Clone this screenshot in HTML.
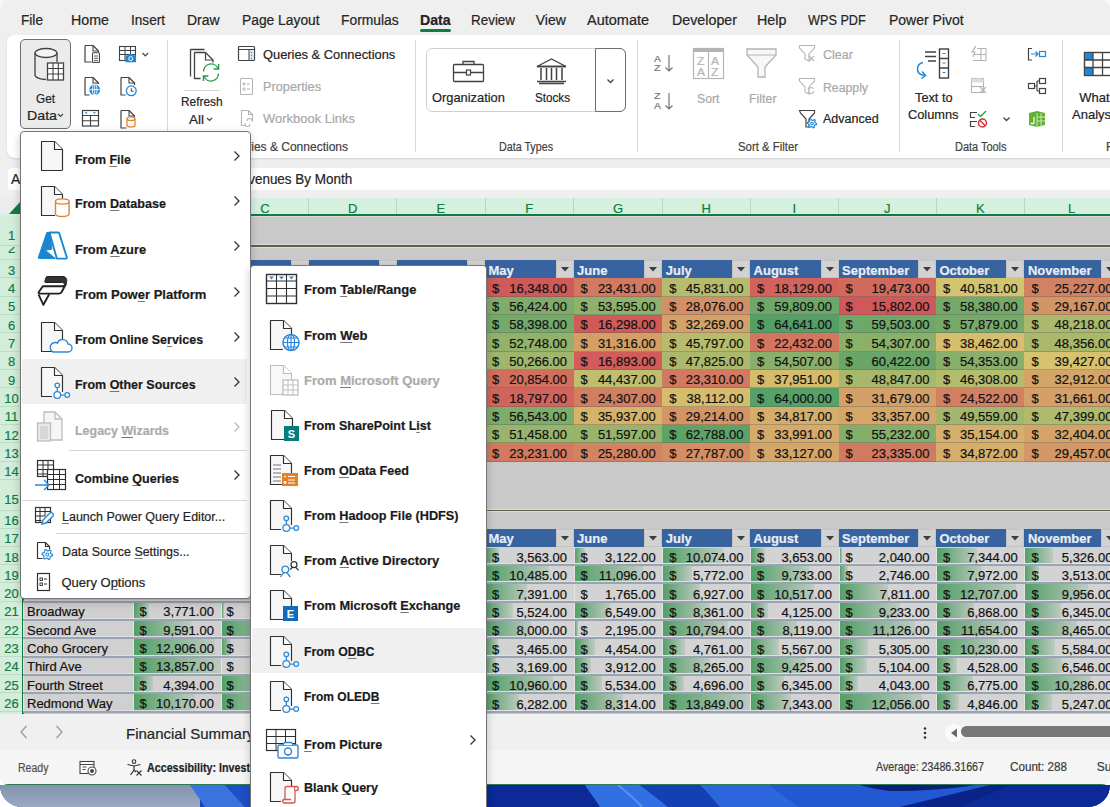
<!DOCTYPE html><html><head><meta charset="utf-8"><style>
*{margin:0;padding:0}
html,body{width:1110px;height:807px;overflow:hidden;background:#fff}
body{position:relative;font-family:"Liberation Sans",sans-serif}
.t{position:absolute;white-space:nowrap;transform-origin:0 0;-webkit-text-stroke:0.2px currentColor}
.r{position:absolute;display:block}
u{text-decoration-thickness:1px;text-underline-offset:2px;text-decoration-color:#777}
</style></head><body><div class="r" style="left:0px;top:0px;width:1110px;height:30px;background:#f7f7f7"></div><div class="r" style="left:0;top:0;width:1110px;height:785px;background:#efefef;border-radius:10px 10px 8px 8px;overflow:hidden"><div class="t" style="left:21.0px;top:12.65px;font-size:14px;line-height:14px;color:#242424;transform:scaleX(0.975);">File</div><div class="t" style="left:71.0px;top:12.65px;font-size:14px;line-height:14px;color:#242424;transform:scaleX(1.018);">Home</div><div class="t" style="left:131.0px;top:12.65px;font-size:14px;line-height:14px;color:#242424;transform:scaleX(0.971);">Insert</div><div class="t" style="left:187.0px;top:12.65px;font-size:14px;line-height:14px;color:#242424;">Draw</div><div class="t" style="left:241.7px;top:12.65px;font-size:14px;line-height:14px;color:#242424;transform:scaleX(0.987);">Page Layout</div><div class="t" style="left:340.7px;top:12.65px;font-size:14px;line-height:14px;color:#242424;transform:scaleX(0.987);">Formulas</div><div class="t" style="left:420.0px;top:12.65px;font-size:14px;line-height:14px;font-weight:bold;color:#242424;transform:scaleX(1.012);">Data</div><div class="t" style="left:471.0px;top:12.65px;font-size:14px;line-height:14px;color:#242424;transform:scaleX(0.959);">Review</div><div class="t" style="left:535.7px;top:12.65px;font-size:14px;line-height:14px;color:#242424;">View</div><div class="t" style="left:587.3px;top:12.65px;font-size:14px;line-height:14px;color:#242424;transform:scaleX(1.035);">Automate</div><div class="t" style="left:671.7px;top:12.65px;font-size:14px;line-height:14px;color:#242424;transform:scaleX(1.019);">Developer</div><div class="t" style="left:757.3px;top:12.65px;font-size:14px;line-height:14px;color:#242424;transform:scaleX(1.021);">Help</div><div class="t" style="left:808.3px;top:12.65px;font-size:14px;line-height:14px;color:#242424;transform:scaleX(0.905);">WPS PDF</div><div class="t" style="left:889.0px;top:12.65px;font-size:14px;line-height:14px;color:#242424;">Power Pivot</div><div class="r" style="left:420px;top:29px;width:31px;height:3px;background:#107c41;border-radius:2px"></div><div class="r" style="left:7px;top:35px;width:1120px;height:123px;background:#fff;border-radius:8px;box-shadow:0 1px 2px rgba(0,0,0,0.12)"></div><div class="r" style="left:166.5px;top:40px;width:1px;height:112px;background:#d9d9d9"></div><div class="r" style="left:415px;top:40px;width:1px;height:112px;background:#d9d9d9"></div><div class="r" style="left:636.5px;top:40px;width:1px;height:112px;background:#d9d9d9"></div><div class="r" style="left:898.5px;top:40px;width:1px;height:112px;background:#d9d9d9"></div><div class="r" style="left:1062px;top:40px;width:1px;height:112px;background:#d9d9d9"></div><div class="r" style="left:20px;top:39px;width:51px;height:90px;background:#ebebeb;border:1px solid #6e6e6e;border-radius:5px;box-sizing:border-box"></div><svg class="r" style="left:33px;top:47px" width="32" height="35" viewBox="0 0 32 35" fill="none"><ellipse cx="13" cy="6" rx="11" ry="4.5" stroke="#424242" stroke-width="1.3" fill="#f4f4f4"/><path d="M2 6v22c0 2.5 5 4.5 11 4.5" stroke="#424242" stroke-width="1.3"/><path d="M24 6v9" stroke="#424242" stroke-width="1.3"/><rect x="14.5" y="16" width="16" height="17" fill="#fff" stroke="#424242" stroke-width="1.3"/><path d="M14.5 21.5h16M14.5 27h16M20 16v17M25.3 16v17" stroke="#424242" stroke-width="1.1"/><rect x="14.5" y="16" width="16" height="5" fill="#424242" opacity="0.0"/></svg><div class="t" style="left:36.0px;top:91.50px;font-size:13px;line-height:13px;color:#242424;transform:scaleX(0.907);">Get</div><div class="t" style="left:26.8px;top:108.70px;font-size:13px;line-height:13px;color:#242424;transform:scaleX(1.093);">Data</div><svg class="r" style="left:57px;top:113px" width="7" height="5" viewBox="0 0 7 5" fill="none"><path d="M1 1l2.5 2.5L6 1" stroke="#424242" stroke-width="1.2"/></svg><svg class="r" style="left:78px;top:40px" width="80" height="90" viewBox="0 0 80 90" fill="none"><path d="M7 5.5H15L20.5 11V12.5M7 5.5V22H13.5" stroke="#424242" stroke-width="1.2" stroke-linejoin="round"/><path d="M15 5.5V11H20.5" stroke="#424242" stroke-width="1.1"/><rect x="14.5" y="12.8" width="7" height="9.7" rx="1" stroke="#424242" stroke-width="1.1" fill="#fff"/><path d="M16 16H20M16 18.3H20M16 20.6H20" stroke="#424242" stroke-width=".9"/><path d="M7 37.5H15L20.5 43V44M7 37.5V55H11.5" stroke="#424242" stroke-width="1.2" stroke-linejoin="round"/><path d="M15 37.5V43H20.5" stroke="#424242" stroke-width="1.1"/><circle cx="16.7" cy="49.7" r="5.4" fill="#1f87d6"/><path d="M11.6 49.7H21.8M16.7 44.5V55" stroke="#fff" stroke-width=".9"/><ellipse cx="16.7" cy="49.7" rx="2.3" ry="5.2" stroke="#fff" stroke-width=".9"/><rect x="4.5" y="70.5" width="16" height="15.5" stroke="#424242" stroke-width="1.2" fill="#fff"/><path d="M4.5 75.5H20.5M4.5 80.7H20.5M12.5 75.5V86" stroke="#424242" stroke-width="1.1"/><path d="M6.5 72.3h3.2L8.1 74zM14.8 72.3h3.2L16.4 74z" fill="#1f87d6"/><rect x="41.5" y="6.5" width="16" height="14" stroke="#424242" stroke-width="1.1" fill="#fff"/><path d="M41.5 10.5H57.5M41.5 14.5H57.5M47 6.5V20.5M52.5 6.5V14.5" stroke="#424242" stroke-width="1"/><path d="M47.5 15.3h2.5l1-1.3h3.5l1 1.3h2.5v7h-10.5z" fill="#1f87d6"/><circle cx="52.7" cy="18.6" r="2" stroke="#fff" stroke-width="1"/><path d="M64.5 13l2.8 2.8 2.8-2.8" stroke="#424242" stroke-width="1.2"/><path d="M43 37.5H51L56.5 43V45M43 37.5V55H47.5" stroke="#424242" stroke-width="1.2" stroke-linejoin="round"/><path d="M51 37.5V43H56.5" stroke="#424242" stroke-width="1.1"/><circle cx="53.3" cy="50.8" r="4.9" stroke="#1f87d6" stroke-width="1.3" fill="#fff"/><path d="M53.3 48.2V51.2H55.6" stroke="#424242" stroke-width="1"/><path d="M43 70.5H51L56.5 76V77M43 70.5V88H48.5" stroke="#424242" stroke-width="1.2" stroke-linejoin="round"/><path d="M51 70.5V76H56.5" stroke="#424242" stroke-width="1.1"/><path d="M49 78.7V85.3c0 1 1.8 1.7 4 1.7s4-.7 4-1.7V78.7" stroke="#e07b1a" stroke-width="1.2" fill="#fff"/><ellipse cx="53" cy="78.7" rx="4" ry="1.7" stroke="#e07b1a" stroke-width="1.2" fill="#fff"/></svg><svg class="r" style="left:180px;top:40px" width="50" height="50" viewBox="0 0 50 50" fill="none"><path d="M10.5 9.5H24.5M10.5 9.5V36.5" stroke="#424242" stroke-width="1.3"/><path d="M14.5 12.5H25.5L33 20V22.5M14.5 12.5V38.5H20.5" stroke="#424242" stroke-width="1.3" stroke-linejoin="round"/><path d="M25.5 12.5V20H33" stroke="#424242" stroke-width="1.2"/><path d="M23.6 31.5A7.5 7.5 0 0 1 38 28.5M38.4 33.5A7.5 7.5 0 0 1 24 36.5" stroke="#2a9a4a" stroke-width="1.4"/><path d="M38.6 24V29H33.6M23.4 41V36H28.4" stroke="#2a9a4a" stroke-width="1.4"/></svg><div class="r" style="left:184px;top:89.5px;width:36px;height:1px;background:#d5d5d5"></div><div class="t" style="left:180.5px;top:95.00px;font-size:13px;line-height:13px;color:#242424;transform:scaleX(0.912);">Refresh</div><div class="t" style="left:188.8px;top:112.60px;font-size:13px;line-height:13px;color:#242424;transform:scaleX(1.038);">All</div><svg class="r" style="left:206px;top:117px" width="7" height="5" viewBox="0 0 7 5" fill="none"><path d="M1 1l2.5 2.5L6 1" stroke="#424242" stroke-width="1.2"/></svg><svg class="r" style="left:237px;top:45px" width="20" height="18" viewBox="0 0 20 18" fill="none"><rect x="1.5" y="1.5" width="16" height="14" rx="1" stroke="#424242" stroke-width="1.2" fill="#fff"/><path d="M1.5 4.5h16" stroke="#424242" stroke-width="1.2"/><rect x="12" y="5" width="5" height="10" fill="#d6e9f8"/><path d="M12 4.5v11" stroke="#424242" stroke-width="1"/><path d="M14.5 7v1.2M14.5 10v1.2M14.5 13v1.2" stroke="#1f87d6" stroke-width="1"/></svg><div class="t" style="left:262.7px;top:48.62px;font-size:12.5px;line-height:12.5px;color:#242424;transform:scaleX(1.029);">Queries &amp; Connections</div><svg class="r" style="left:239px;top:77px" width="16" height="19" viewBox="0 0 16 19" fill="none"><rect x="1.5" y="1.5" width="12" height="16" rx="1" stroke="#b4b4b4" stroke-width="1.1" fill="#fff"/><path d="M4 6h2v2H4zM4 11h2v2H4z" stroke="#b4b4b4" stroke-width=".9"/><path d="M8 7h3M8 12h3" stroke="#b4b4b4" stroke-width="1"/></svg><div class="t" style="left:262.7px;top:81.02px;font-size:12.5px;line-height:12.5px;color:#a8a8a8;transform:scaleX(1.018);">Properties</div><svg class="r" style="left:239px;top:109px" width="18" height="19" viewBox="0 0 18 19" fill="none"><path d="M2.5 1.5h7l4 4v6M2.5 1.5v15h3" stroke="#b4b4b4" stroke-width="1.1" fill="none"/><path d="M9.5 1.5v4h4" stroke="#b4b4b4" stroke-width="1.1"/><path d="M8 12a2.5 2.5 0 0 1 5 0v1M11 15a2.5 2.5 0 0 1-5 0v-1" stroke="#b4b4b4" stroke-width="1.1"/></svg><div class="t" style="left:262.7px;top:113.02px;font-size:12.5px;line-height:12.5px;color:#a8a8a8;transform:scaleX(1.037);">Workbook Links</div><div class="t" style="left:224.6px;top:141.34px;font-size:12px;line-height:12px;color:#424242;">Queries &amp; Connections</div><div class="r" style="left:425.5px;top:47.5px;width:200px;height:64.5px;border:1px solid #d0d0d0;border-radius:6px;box-sizing:border-box;background:#fff"></div><div class="r" style="left:595px;top:47.5px;width:30.5px;height:64.5px;border:1px solid #6e6e6e;border-radius:0 6px 6px 0;box-sizing:border-box;background:#fff"></div><svg class="r" style="left:606px;top:78px" width="9" height="6" viewBox="0 0 9 6" fill="none"><path d="M1.5 1.5l3 3 3-3" stroke="#424242" stroke-width="1.3"/></svg><svg class="r" style="left:452px;top:59px" width="34" height="25" viewBox="0 0 34 25" fill="none"><rect x="1.5" y="5.5" width="30" height="17" rx="1" stroke="#424242" stroke-width="1.3" fill="#fff"/><path d="M11 5.5v-3h11v3M1.5 13.5h30" stroke="#424242" stroke-width="1.3"/><rect x="14.5" y="11" width="4" height="5" fill="#fff" stroke="#424242" stroke-width="1.2"/></svg><div class="t" style="left:432.4px;top:91.00px;font-size:13px;line-height:13px;color:#242424;transform:scaleX(0.989);">Organization</div><svg class="r" style="left:535px;top:57px" width="33" height="28" viewBox="0 0 33 28" fill="none"><path d="M2 9.5L16.5 2 31 9.5z" stroke="#424242" stroke-width="1.3" fill="#fff"/><path d="M2 9.5h29M2 24.5h29M4 26.5h25" stroke="#424242" stroke-width="1.3"/><path d="M6 11v12M11.5 11v12M16.5 11v12M21.5 11v12M27 11v12" stroke="#424242" stroke-width="1.5"/></svg><div class="t" style="left:535.0px;top:91.00px;font-size:13px;line-height:13px;color:#242424;transform:scaleX(0.897);">Stocks</div><div class="t" style="left:654.0px;top:54.88px;font-size:9px;line-height:9px;color:#777;transform:scaleX(1.166);">A</div><div class="t" style="left:654.0px;top:63.88px;font-size:9px;line-height:9px;color:#777;transform:scaleX(1.200);">Z</div><svg class="r" style="left:664px;top:54px" width="10" height="19" viewBox="0 0 10 19" fill="none"><path d="M5 1v16M1.5 13.5L5 17l3.5-3.5" stroke="#777" stroke-width="1.2"/></svg><div class="t" style="left:654.0px;top:92.38px;font-size:9px;line-height:9px;color:#777;transform:scaleX(1.200);">Z</div><div class="t" style="left:654.0px;top:102.38px;font-size:9px;line-height:9px;color:#777;transform:scaleX(1.166);">A</div><svg class="r" style="left:664px;top:92px" width="10" height="19" viewBox="0 0 10 19" fill="none"><path d="M5 1v16M1.5 13.5L5 17l3.5-3.5" stroke="#777" stroke-width="1.2"/></svg><svg class="r" style="left:692px;top:47px" width="33" height="33" viewBox="0 0 33 33" fill="none"><rect x="1.5" y="1.5" width="30" height="30" stroke="#b4b4b4" stroke-width="1.2" fill="#fff"/><rect x="1.5" y="1.5" width="30" height="3.5" fill="#b4b4b4"/><path d="M16.5 5v26.5" stroke="#b4b4b4" stroke-width="1.2"/></svg><div class="t" style="left:697.0px;top:57.03px;font-size:10px;line-height:10px;color:#b4b4b4;transform:scaleX(1.200);">Z</div><div class="t" style="left:697.0px;top:67.53px;font-size:10px;line-height:10px;color:#b4b4b4;transform:scaleX(1.199);">A</div><div class="t" style="left:711.0px;top:57.03px;font-size:10px;line-height:10px;color:#b4b4b4;transform:scaleX(1.199);">A</div><div class="t" style="left:711.0px;top:67.53px;font-size:10px;line-height:10px;color:#b4b4b4;transform:scaleX(1.200);">Z</div><div class="t" style="left:697.0px;top:91.60px;font-size:13px;line-height:13px;color:#a8a8a8;transform:scaleX(0.944);">Sort</div><svg class="r" style="left:745px;top:47px" width="33" height="33" viewBox="0 0 33 33" fill="none"><path d="M2 2h29v6L20 20v10h-7V20L2 8z" stroke="#b4b4b4" stroke-width="1.3" fill="#f7f7f7"/><path d="M2 8h29" stroke="#b4b4b4" stroke-width="1"/></svg><div class="t" style="left:748.5px;top:91.60px;font-size:13px;line-height:13px;color:#a8a8a8;transform:scaleX(0.952);">Filter</div><svg class="r" style="left:798px;top:44px" width="19" height="19" viewBox="0 0 19 19" fill="none"><path d="M1.5 1.5h15v2.5l-5.5 6v7l-4 -2v-5l-5.5-6z" stroke="#b4b4b4" stroke-width="1.1" fill="#fff"/><path d="M11 12l5 5M16 12l-5 5" stroke="#b4b4b4" stroke-width="1.1"/></svg><div class="t" style="left:823.0px;top:48.72px;font-size:12.5px;line-height:12.5px;color:#a8a8a8;">Clear</div><svg class="r" style="left:798px;top:77px" width="19" height="19" viewBox="0 0 19 19" fill="none"><path d="M1.5 1.5h15v2.5l-5.5 6v7l-4 -2v-5l-5.5-6z" stroke="#b4b4b4" stroke-width="1.1" fill="#fff"/><path d="M10 13a3 3 0 0 1 5.5-1M16 14a3 3 0 0 1-5.5 1" stroke="#b4b4b4" stroke-width="1.1"/></svg><div class="t" style="left:823.0px;top:81.62px;font-size:12.5px;line-height:12.5px;color:#a8a8a8;transform:scaleX(0.981);">Reapply</div><svg class="r" style="left:798px;top:109px" width="19" height="20" viewBox="0 0 19 20" fill="none"><path d="M1.5 1.5h15v2.5l-5.5 6v8h-3v-8l-5.5-6z" stroke="#424242" stroke-width="1.2" fill="#fff"/><path d="M18.60 14.50 L18.44 15.69 L16.77 16.10 L16.26 16.76 L16.30 18.48 L15.19 18.94 L14.00 17.70 L13.17 17.59 L11.70 18.48 L10.75 17.75 L11.23 16.10 L10.91 15.33 L9.40 14.50 L9.56 13.31 L11.23 12.90 L11.74 12.24 L11.70 10.52 L12.81 10.06 L14.00 11.30 L14.83 11.41 L16.30 10.52 L17.25 11.25 L16.77 12.90 L17.09 13.67Z" stroke="#1f87d6" stroke-width="1.2" fill="#fff" stroke-linejoin="round"/><circle cx="14" cy="14.5" r="1.30" stroke="#1f87d6" stroke-width="1.08" fill="#fff"/></svg><div class="t" style="left:823.0px;top:113.22px;font-size:12.5px;line-height:12.5px;color:#242424;">Advanced</div><div class="t" style="left:738.0px;top:141.34px;font-size:12px;line-height:12px;color:#424242;transform:scaleX(0.947);">Sort &amp; Filter</div><div class="t" style="left:499.0px;top:141.34px;font-size:12px;line-height:12px;color:#424242;transform:scaleX(0.893);">Data Types</div><svg class="r" style="left:914px;top:47px" width="37" height="34" viewBox="0 0 37 34" fill="none"><path d="M11 5h11M11 9.5h11M14 14h8" stroke="#424242" stroke-width="1.4"/><path d="M9 15.5C2 17 1 27 10 28.5" stroke="#1f87d6" stroke-width="1.5"/><path d="M8 24.5l3.5 4-4 3" stroke="#1f87d6" stroke-width="1.5"/><rect x="25.5" y="2" width="9" height="29" stroke="#424242" stroke-width="1.4" fill="#fff"/><path d="M25.5 11.5h9M25.5 21h9" stroke="#424242" stroke-width="1.4"/><path d="M28.5 6.5h3M28.5 16h3M28.5 25.5h3" stroke="#1f87d6" stroke-width="1.2"/></svg><div class="t" style="left:914.8px;top:91.40px;font-size:13px;line-height:13px;color:#242424;transform:scaleX(0.982);">Text to</div><div class="t" style="left:908.0px;top:108.20px;font-size:13px;line-height:13px;color:#242424;transform:scaleX(0.983);">Columns</div><svg class="r" style="left:969px;top:45px" width="19" height="17" viewBox="0 0 19 17" fill="none"><path d="M4 15.5h13V3.5H8M17 9.5H4M12 3.5v12" stroke="#b4b4b4" stroke-width="1.1"/><path d="M7 1L3 7h3l-2 5" stroke="#b4b4b4" stroke-width="1.2"/></svg><svg class="r" style="left:969px;top:77px" width="19" height="18" viewBox="0 0 19 18" fill="none"><rect x="2.5" y="1.5" width="12" height="14" stroke="#b4b4b4" stroke-width="1.1" fill="#fff"/><rect x="2.5" y="1.5" width="12" height="4" fill="#ddd"/><path d="M2.5 9.5h12" stroke="#b4b4b4" stroke-width="1.1"/><path d="M11 10l6 6M17 10l-6 6" stroke="#b4b4b4" stroke-width="1.2"/></svg><svg class="r" style="left:969px;top:109px" width="20" height="19" viewBox="0 0 20 19" fill="none"><path d="M8 3.5H1.5v5H6M8 12.5H1.5v5H6" stroke="#424242" stroke-width="1.2"/><path d="M9 5l2.5 2.5L17 2" stroke="#2ea043" stroke-width="1.4"/><circle cx="13.5" cy="14" r="4" stroke="#d13438" stroke-width="1.5"/><path d="M10.8 11.3l5.4 5.4" stroke="#d13438" stroke-width="1.5"/></svg><svg class="r" style="left:1002px;top:116px" width="8" height="6" viewBox="0 0 8 6" fill="none"><path d="M1.5 1.5l3 3 3-3" stroke="#424242" stroke-width="1.3"/></svg><svg class="r" style="left:1027px;top:46px" width="20" height="16" viewBox="0 0 20 16" fill="none"><path d="M5 2.5H1.5V14H5M1.5 8h-0" stroke="#424242" stroke-width="1.2"/><path d="M4 8h7M8.5 5.5L11 8l-2.5 2.5" stroke="#1f87d6" stroke-width="1.2"/><rect x="12.5" y="5.5" width="6" height="5" stroke="#1f87d6" stroke-width="1.2"/></svg><svg class="r" style="left:1027px;top:77px" width="20" height="18" viewBox="0 0 20 18" fill="none"><rect x="1.5" y="6.5" width="6" height="5" stroke="#424242" stroke-width="1.2"/><rect x="12.5" y="1.5" width="6" height="5" stroke="#424242" stroke-width="1.2"/><rect x="12.5" y="11.5" width="6" height="5" stroke="#424242" stroke-width="1.2"/><path d="M7.5 9h2.5M10 4v10M10 4h2.5M10 14h2.5" stroke="#424242" stroke-width="1.2"/></svg><svg class="r" style="left:1027px;top:110px" width="20" height="18" viewBox="0 0 20 18" fill="none"><path d="M2 3l8-2 8 2v12l-8 2-8-2z" fill="#5fb132"/><path d="M10 3v14M10 7h8M10 11h8M14 3v14" stroke="#cde8bb" stroke-width="1"/><path d="M7 7v6a2 2 0 0 1-3 0" stroke="#fff" stroke-width="1.2"/></svg><div class="t" style="left:955.2px;top:140.84px;font-size:12px;line-height:12px;color:#424242;transform:scaleX(0.912);">Data Tools</div><svg class="r" style="left:1083px;top:51px" width="30" height="26" viewBox="0 0 30 26" fill="none"><rect x="1.5" y="1.5" width="28" height="23" stroke="#424242" stroke-width="1.4" fill="#fff"/><rect x="2" y="2" width="8" height="7" fill="#1f87d6"/><rect x="2" y="17" width="8" height="7" fill="#1f87d6"/><path d="M1.5 9h28M1.5 16.5h28M10 1.5v23M19.5 1.5v23" stroke="#424242" stroke-width="1.3"/></svg><div class="t" style="left:1079.3px;top:91.40px;font-size:13px;line-height:13px;color:#242424;">What</div><div class="t" style="left:1072.0px;top:108.20px;font-size:13px;line-height:13px;color:#242424;">Analysis</div><div class="t" style="left:1106.0px;top:140.84px;font-size:12px;line-height:12px;color:#424242;">F</div><div class="r" style="left:8px;top:168px;width:1110px;height:22px;background:#fff;border-radius:4px"></div><div class="t" style="left:11.0px;top:171.75px;font-size:14px;line-height:14px;color:#242424;">A</div><div class="t" style="left:230.8px;top:171.95px;font-size:14px;line-height:14px;color:#242424;transform:scaleX(0.961);">Revenues By Month</div><div class="r" style="left:23px;top:216px;width:1090px;height:498px;background:#c9c9c9"></div><div class="r" style="left:0px;top:198px;width:1110px;height:18px;background:#d5f0de"></div><div class="r" style="left:133px;top:198px;width:1px;height:16px;background:#b7d9c2"></div><div class="t" style="left:73.7px;top:201.70px;font-size:13px;line-height:13px;color:#107c41;">A</div><div class="r" style="left:221px;top:198px;width:1px;height:16px;background:#b7d9c2"></div><div class="t" style="left:172.9px;top:201.70px;font-size:13px;line-height:13px;color:#107c41;">B</div><div class="r" style="left:308px;top:198px;width:1px;height:16px;background:#b7d9c2"></div><div class="t" style="left:260.3px;top:201.70px;font-size:13px;line-height:13px;color:#107c41;">C</div><div class="r" style="left:396px;top:198px;width:1px;height:16px;background:#b7d9c2"></div><div class="t" style="left:348.0px;top:201.70px;font-size:13px;line-height:13px;color:#107c41;">D</div><div class="r" style="left:485px;top:198px;width:1px;height:16px;background:#b7d9c2"></div><div class="t" style="left:436.6px;top:201.70px;font-size:13px;line-height:13px;color:#107c41;">E</div><div class="r" style="left:573px;top:198px;width:1px;height:16px;background:#b7d9c2"></div><div class="t" style="left:525.3px;top:201.70px;font-size:13px;line-height:13px;color:#107c41;">F</div><div class="r" style="left:662px;top:198px;width:1px;height:16px;background:#b7d9c2"></div><div class="t" style="left:612.9px;top:201.70px;font-size:13px;line-height:13px;color:#107c41;">G</div><div class="r" style="left:750px;top:198px;width:1px;height:16px;background:#b7d9c2"></div><div class="t" style="left:701.5px;top:201.70px;font-size:13px;line-height:13px;color:#107c41;">H</div><div class="r" style="left:838px;top:198px;width:1px;height:16px;background:#b7d9c2"></div><div class="t" style="left:792.5px;top:201.70px;font-size:13px;line-height:13px;color:#107c41;">I</div><div class="r" style="left:936px;top:198px;width:1px;height:16px;background:#b7d9c2"></div><div class="t" style="left:884.0px;top:201.70px;font-size:13px;line-height:13px;color:#107c41;">J</div><div class="r" style="left:1024px;top:198px;width:1px;height:16px;background:#b7d9c2"></div><div class="t" style="left:975.9px;top:201.70px;font-size:13px;line-height:13px;color:#107c41;">K</div><div class="r" style="left:1119px;top:198px;width:1px;height:16px;background:#b7d9c2"></div><div class="t" style="left:1068.1px;top:201.70px;font-size:13px;line-height:13px;color:#107c41;">L</div><div class="r" style="left:22px;top:214px;width:1090px;height:2px;background:#107c41"></div><div class="r" style="left:0px;top:198px;width:22px;height:16px;background:#ececec"></div><svg class="r" style="left:9px;top:202px" width="12" height="13" viewBox="0 0 12 13" fill="none"><path d="M11 0V12H0z" fill="#107c41"/></svg><div class="r" style="left:0px;top:216px;width:23px;height:498px;background:#d3eddb"></div><div class="r" style="left:22px;top:216px;width:1.5px;height:498px;background:#107c41"></div><div class="r" style="left:0px;top:245px;width:22px;height:1px;background:#bcdcc6"></div><div class="t" style="left:7.9px;top:228.70px;font-size:13px;line-height:13px;color:#107c41;">1</div><div class="r" style="left:0px;top:259px;width:22px;height:1px;background:#bcdcc6"></div><div class="r" style="left:0;top:247px;width:22px;height:12px;overflow:hidden"><div class="t" style="left:7.9px;top:-4.60px;font-size:13px;line-height:13px;color:#107c41;">2</div></div><div class="r" style="left:0px;top:277px;width:22px;height:1px;background:#bcdcc6"></div><div class="t" style="left:7.9px;top:263.60px;font-size:13px;line-height:13px;color:#107c41;">3</div><div class="r" style="left:0px;top:296px;width:22px;height:1px;background:#bcdcc6"></div><div class="t" style="left:7.9px;top:281.94px;font-size:13px;line-height:13px;color:#107c41;">4</div><div class="r" style="left:0px;top:314px;width:22px;height:1px;background:#bcdcc6"></div><div class="t" style="left:7.9px;top:300.28px;font-size:13px;line-height:13px;color:#107c41;">5</div><div class="r" style="left:0px;top:332px;width:22px;height:1px;background:#bcdcc6"></div><div class="t" style="left:7.9px;top:318.62px;font-size:13px;line-height:13px;color:#107c41;">6</div><div class="r" style="left:0px;top:351px;width:22px;height:1px;background:#bcdcc6"></div><div class="t" style="left:7.9px;top:336.96px;font-size:13px;line-height:13px;color:#107c41;">7</div><div class="r" style="left:0px;top:369px;width:22px;height:1px;background:#bcdcc6"></div><div class="t" style="left:7.9px;top:355.30px;font-size:13px;line-height:13px;color:#107c41;">8</div><div class="r" style="left:0px;top:387px;width:22px;height:1px;background:#bcdcc6"></div><div class="t" style="left:7.9px;top:373.64px;font-size:13px;line-height:13px;color:#107c41;">9</div><div class="r" style="left:0px;top:406px;width:22px;height:1px;background:#bcdcc6"></div><div class="t" style="left:4.3px;top:391.98px;font-size:13px;line-height:13px;color:#107c41;">10</div><div class="r" style="left:0px;top:424px;width:22px;height:1px;background:#bcdcc6"></div><div class="t" style="left:4.8px;top:410.32px;font-size:13px;line-height:13px;color:#107c41;">11</div><div class="r" style="left:0px;top:442px;width:22px;height:1px;background:#bcdcc6"></div><div class="t" style="left:4.3px;top:428.66px;font-size:13px;line-height:13px;color:#107c41;">12</div><div class="r" style="left:0px;top:461px;width:22px;height:1px;background:#bcdcc6"></div><div class="t" style="left:4.3px;top:447.00px;font-size:13px;line-height:13px;color:#107c41;">13</div><div class="r" style="left:0px;top:479px;width:22px;height:1px;background:#bcdcc6"></div><div class="t" style="left:4.3px;top:464.60px;font-size:13px;line-height:13px;color:#107c41;">14</div><div class="r" style="left:0px;top:510px;width:22px;height:1px;background:#bcdcc6"></div><div class="t" style="left:4.3px;top:492.90px;font-size:13px;line-height:13px;color:#107c41;">15</div><div class="r" style="left:0px;top:528px;width:22px;height:1px;background:#bcdcc6"></div><div class="t" style="left:4.3px;top:513.80px;font-size:13px;line-height:13px;color:#107c41;">16</div><div class="r" style="left:0px;top:546px;width:22px;height:1px;background:#bcdcc6"></div><div class="t" style="left:4.3px;top:532.40px;font-size:13px;line-height:13px;color:#107c41;">17</div><div class="r" style="left:0px;top:564px;width:22px;height:1px;background:#bcdcc6"></div><div class="t" style="left:4.3px;top:550.52px;font-size:13px;line-height:13px;color:#107c41;">18</div><div class="r" style="left:0px;top:582px;width:22px;height:1px;background:#bcdcc6"></div><div class="t" style="left:4.3px;top:568.84px;font-size:13px;line-height:13px;color:#107c41;">19</div><div class="r" style="left:0px;top:601px;width:22px;height:1px;background:#bcdcc6"></div><div class="t" style="left:4.3px;top:587.16px;font-size:13px;line-height:13px;color:#107c41;">20</div><div class="r" style="left:0px;top:619px;width:22px;height:1px;background:#bcdcc6"></div><div class="t" style="left:4.3px;top:605.48px;font-size:13px;line-height:13px;color:#107c41;">21</div><div class="r" style="left:0px;top:637px;width:22px;height:1px;background:#bcdcc6"></div><div class="t" style="left:4.3px;top:623.80px;font-size:13px;line-height:13px;color:#107c41;">22</div><div class="r" style="left:0px;top:656px;width:22px;height:1px;background:#bcdcc6"></div><div class="t" style="left:4.3px;top:642.12px;font-size:13px;line-height:13px;color:#107c41;">23</div><div class="r" style="left:0px;top:674px;width:22px;height:1px;background:#bcdcc6"></div><div class="t" style="left:4.3px;top:660.44px;font-size:13px;line-height:13px;color:#107c41;">24</div><div class="r" style="left:0px;top:692px;width:22px;height:1px;background:#bcdcc6"></div><div class="t" style="left:4.3px;top:678.76px;font-size:13px;line-height:13px;color:#107c41;">25</div><div class="r" style="left:0px;top:711px;width:22px;height:1px;background:#bcdcc6"></div><div class="t" style="left:4.3px;top:697.08px;font-size:13px;line-height:13px;color:#107c41;">26</div><div class="r" style="left:23px;top:244px;width:1090px;height:1px;background:rgba(255,255,255,0.35)"></div><div class="r" style="left:23px;top:245px;width:1090px;height:1.5px;background:#5c6148"></div><div class="r" style="left:23px;top:246.5px;width:1090px;height:1px;background:rgba(255,255,255,0.35)"></div><div class="r" style="left:23px;top:216px;width:1090px;height:1px;background:rgba(255,255,255,0.35)"></div><div class="r" style="left:23px;top:508.5px;width:1090px;height:1px;background:rgba(255,255,255,0.35)"></div><div class="r" style="left:23px;top:509.5px;width:1090px;height:1.5px;background:#5c6148"></div><div class="r" style="left:23px;top:511px;width:1090px;height:1px;background:rgba(255,255,255,0.35)"></div><div class="r" style="left:221px;top:260px;width:88px;height:18.19999999999999px;background:#3763a0"></div><div class="r" style="left:291px;top:260px;width:18px;height:18.19999999999999px;background:#d2d2d2;box-shadow:inset 0 0 0 1px #c4c4c4"></div><svg class="r" style="left:296px;top:267px" width="8" height="5" viewBox="0 0 8 5" fill="none"><path d="M0 0h8L4 4.5z" fill="#3c3c3c"/></svg><div class="r" style="left:309px;top:260px;width:88px;height:18.19999999999999px;background:#3763a0"></div><div class="r" style="left:379px;top:260px;width:18px;height:18.19999999999999px;background:#d2d2d2;box-shadow:inset 0 0 0 1px #c4c4c4"></div><svg class="r" style="left:384px;top:267px" width="8" height="5" viewBox="0 0 8 5" fill="none"><path d="M0 0h8L4 4.5z" fill="#3c3c3c"/></svg><div class="r" style="left:397px;top:260px;width:88px;height:18.19999999999999px;background:#3763a0"></div><div class="r" style="left:467px;top:260px;width:18px;height:18.19999999999999px;background:#d2d2d2;box-shadow:inset 0 0 0 1px #c4c4c4"></div><svg class="r" style="left:472px;top:267px" width="8" height="5" viewBox="0 0 8 5" fill="none"><path d="M0 0h8L4 4.5z" fill="#3c3c3c"/></svg><div class="r" style="left:485px;top:260px;width:89px;height:18.19999999999999px;background:#3763a0"></div><div class="r" style="left:556px;top:260px;width:18px;height:18.19999999999999px;background:#d2d2d2;box-shadow:inset 0 0 0 1px #c4c4c4"></div><svg class="r" style="left:561px;top:267px" width="8" height="5" viewBox="0 0 8 5" fill="none"><path d="M0 0h8L4 4.5z" fill="#3c3c3c"/></svg><div class="t" style="left:488.5px;top:263.80px;font-size:13px;line-height:13px;font-weight:bold;color:#e9eef6;">May</div><div class="r" style="left:574px;top:260px;width:88px;height:18.19999999999999px;background:#3763a0"></div><div class="r" style="left:644px;top:260px;width:18px;height:18.19999999999999px;background:#d2d2d2;box-shadow:inset 0 0 0 1px #c4c4c4"></div><svg class="r" style="left:649px;top:267px" width="8" height="5" viewBox="0 0 8 5" fill="none"><path d="M0 0h8L4 4.5z" fill="#3c3c3c"/></svg><div class="t" style="left:577.1px;top:263.80px;font-size:13px;line-height:13px;font-weight:bold;color:#e9eef6;">June</div><div class="r" style="left:662px;top:260px;width:88px;height:18.19999999999999px;background:#3763a0"></div><div class="r" style="left:732px;top:260px;width:18px;height:18.19999999999999px;background:#d2d2d2;box-shadow:inset 0 0 0 1px #c4c4c4"></div><svg class="r" style="left:737px;top:267px" width="8" height="5" viewBox="0 0 8 5" fill="none"><path d="M0 0h8L4 4.5z" fill="#3c3c3c"/></svg><div class="t" style="left:665.8px;top:263.80px;font-size:13px;line-height:13px;font-weight:bold;color:#e9eef6;">July</div><div class="r" style="left:750px;top:260px;width:89px;height:18.19999999999999px;background:#3763a0"></div><div class="r" style="left:821px;top:260px;width:18px;height:18.19999999999999px;background:#d2d2d2;box-shadow:inset 0 0 0 1px #c4c4c4"></div><svg class="r" style="left:826px;top:267px" width="8" height="5" viewBox="0 0 8 5" fill="none"><path d="M0 0h8L4 4.5z" fill="#3c3c3c"/></svg><div class="t" style="left:753.6px;top:263.80px;font-size:13px;line-height:13px;font-weight:bold;color:#e9eef6;">August</div><div class="r" style="left:839px;top:260px;width:97px;height:18.19999999999999px;background:#3763a0"></div><div class="r" style="left:918px;top:260px;width:18px;height:18.19999999999999px;background:#d2d2d2;box-shadow:inset 0 0 0 1px #c4c4c4"></div><svg class="r" style="left:923px;top:267px" width="8" height="5" viewBox="0 0 8 5" fill="none"><path d="M0 0h8L4 4.5z" fill="#3c3c3c"/></svg><div class="t" style="left:842.1px;top:263.80px;font-size:13px;line-height:13px;font-weight:bold;color:#e9eef6;">September</div><div class="r" style="left:936px;top:260px;width:88px;height:18.19999999999999px;background:#3763a0"></div><div class="r" style="left:1006px;top:260px;width:18px;height:18.19999999999999px;background:#d2d2d2;box-shadow:inset 0 0 0 1px #c4c4c4"></div><svg class="r" style="left:1011px;top:267px" width="8" height="5" viewBox="0 0 8 5" fill="none"><path d="M0 0h8L4 4.5z" fill="#3c3c3c"/></svg><div class="t" style="left:939.5px;top:263.80px;font-size:13px;line-height:13px;font-weight:bold;color:#e9eef6;">October</div><div class="r" style="left:1024px;top:260px;width:95px;height:18.19999999999999px;background:#3763a0"></div><div class="r" style="left:1101px;top:260px;width:18px;height:18.19999999999999px;background:#d2d2d2;box-shadow:inset 0 0 0 1px #c4c4c4"></div><svg class="r" style="left:1106px;top:267px" width="8" height="5" viewBox="0 0 8 5" fill="none"><path d="M0 0h8L4 4.5z" fill="#3c3c3c"/></svg><div class="t" style="left:1027.9px;top:263.80px;font-size:13px;line-height:13px;font-weight:bold;color:#e9eef6;">November</div><div class="r" style="left:485px;top:278px;width:89px;height:19px;background:#d05a5a"></div><div class="t" style="left:492.0px;top:281.74px;font-size:13px;line-height:13px;color:#111;">$</div><div class="t" style="left:509.2px;top:281.74px;font-size:13px;line-height:13px;color:#111;">16,348.00</div><div class="r" style="left:574px;top:278px;width:88px;height:19px;background:#d27a61"></div><div class="t" style="left:580.6px;top:281.74px;font-size:13px;line-height:13px;color:#111;">$</div><div class="t" style="left:597.9px;top:281.74px;font-size:13px;line-height:13px;color:#111;">23,431.00</div><div class="r" style="left:662px;top:278px;width:88px;height:19px;background:#b7bc6d"></div><div class="t" style="left:669.3px;top:281.74px;font-size:13px;line-height:13px;color:#111;">$</div><div class="t" style="left:685.7px;top:281.74px;font-size:13px;line-height:13px;color:#111;">45,831.00</div><div class="r" style="left:750px;top:278px;width:89px;height:19px;background:#d1625c"></div><div class="t" style="left:757.1px;top:281.74px;font-size:13px;line-height:13px;color:#111;">$</div><div class="t" style="left:774.2px;top:281.74px;font-size:13px;line-height:13px;color:#111;">18,129.00</div><div class="r" style="left:839px;top:278px;width:97px;height:19px;background:#d1695d"></div><div class="t" style="left:845.6px;top:281.74px;font-size:13px;line-height:13px;color:#111;">$</div><div class="t" style="left:871.6px;top:281.74px;font-size:13px;line-height:13px;color:#111;">19,473.00</div><div class="r" style="left:936px;top:278px;width:88px;height:19px;background:#d3c46f"></div><div class="t" style="left:943.0px;top:281.74px;font-size:13px;line-height:13px;color:#111;">$</div><div class="t" style="left:960.0px;top:281.74px;font-size:13px;line-height:13px;color:#111;">40,581.00</div><div class="r" style="left:1024px;top:278px;width:95px;height:19px;background:#d28262"></div><div class="t" style="left:1031.4px;top:281.74px;font-size:13px;line-height:13px;color:#111;">$</div><div class="t" style="left:1054.6px;top:281.74px;font-size:13px;line-height:13px;color:#111;">25,227.00</div><div class="r" style="left:485px;top:296px;width:630px;height:1px;background:rgba(90,90,90,0.35)"></div><div class="r" style="left:485px;top:297px;width:89px;height:18px;background:#7fac6a"></div><div class="t" style="left:492.0px;top:300.08px;font-size:13px;line-height:13px;color:#111;">$</div><div class="t" style="left:509.2px;top:300.08px;font-size:13px;line-height:13px;color:#111;">56,424.00</div><div class="r" style="left:574px;top:297px;width:88px;height:18px;background:#8eb16b"></div><div class="t" style="left:580.6px;top:300.08px;font-size:13px;line-height:13px;color:#111;">$</div><div class="t" style="left:597.9px;top:300.08px;font-size:13px;line-height:13px;color:#111;">53,595.00</div><div class="r" style="left:662px;top:297px;width:88px;height:18px;background:#d38f65"></div><div class="t" style="left:669.3px;top:300.08px;font-size:13px;line-height:13px;color:#111;">$</div><div class="t" style="left:685.7px;top:300.08px;font-size:13px;line-height:13px;color:#111;">28,076.00</div><div class="r" style="left:750px;top:297px;width:89px;height:18px;background:#6da769"></div><div class="t" style="left:757.1px;top:300.08px;font-size:13px;line-height:13px;color:#111;">$</div><div class="t" style="left:774.2px;top:300.08px;font-size:13px;line-height:13px;color:#111;">59,809.00</div><div class="r" style="left:839px;top:297px;width:97px;height:18px;background:#d0585a"></div><div class="t" style="left:845.6px;top:300.08px;font-size:13px;line-height:13px;color:#111;">$</div><div class="t" style="left:871.6px;top:300.08px;font-size:13px;line-height:13px;color:#111;">15,802.00</div><div class="r" style="left:936px;top:297px;width:88px;height:18px;background:#74a969"></div><div class="t" style="left:943.0px;top:300.08px;font-size:13px;line-height:13px;color:#111;">$</div><div class="t" style="left:960.0px;top:300.08px;font-size:13px;line-height:13px;color:#111;">58,380.00</div><div class="r" style="left:1024px;top:297px;width:95px;height:18px;background:#d39466"></div><div class="t" style="left:1031.4px;top:300.08px;font-size:13px;line-height:13px;color:#111;">$</div><div class="t" style="left:1054.6px;top:300.08px;font-size:13px;line-height:13px;color:#111;">29,167.00</div><div class="r" style="left:485px;top:314px;width:630px;height:1px;background:rgba(90,90,90,0.35)"></div><div class="r" style="left:485px;top:315px;width:89px;height:18px;background:#74a969"></div><div class="t" style="left:492.0px;top:318.42px;font-size:13px;line-height:13px;color:#111;">$</div><div class="t" style="left:509.2px;top:318.42px;font-size:13px;line-height:13px;color:#111;">58,398.00</div><div class="r" style="left:574px;top:315px;width:88px;height:18px;background:#d05a5a"></div><div class="t" style="left:580.6px;top:318.42px;font-size:13px;line-height:13px;color:#111;">$</div><div class="t" style="left:597.9px;top:318.42px;font-size:13px;line-height:13px;color:#111;">16,298.00</div><div class="r" style="left:662px;top:315px;width:88px;height:18px;background:#d4a268"></div><div class="t" style="left:669.3px;top:318.42px;font-size:13px;line-height:13px;color:#111;">$</div><div class="t" style="left:685.7px;top:318.42px;font-size:13px;line-height:13px;color:#111;">32,269.00</div><div class="r" style="left:750px;top:315px;width:89px;height:18px;background:#53a067"></div><div class="t" style="left:757.1px;top:318.42px;font-size:13px;line-height:13px;color:#111;">$</div><div class="t" style="left:774.2px;top:318.42px;font-size:13px;line-height:13px;color:#111;">64,641.00</div><div class="r" style="left:839px;top:315px;width:97px;height:18px;background:#6ea869"></div><div class="t" style="left:845.6px;top:318.42px;font-size:13px;line-height:13px;color:#111;">$</div><div class="t" style="left:871.6px;top:318.42px;font-size:13px;line-height:13px;color:#111;">59,503.00</div><div class="r" style="left:936px;top:315px;width:88px;height:18px;background:#77aa69"></div><div class="t" style="left:943.0px;top:318.42px;font-size:13px;line-height:13px;color:#111;">$</div><div class="t" style="left:960.0px;top:318.42px;font-size:13px;line-height:13px;color:#111;">57,879.00</div><div class="r" style="left:1024px;top:315px;width:95px;height:18px;background:#aab96c"></div><div class="t" style="left:1031.4px;top:318.42px;font-size:13px;line-height:13px;color:#111;">$</div><div class="t" style="left:1054.6px;top:318.42px;font-size:13px;line-height:13px;color:#111;">48,218.00</div><div class="r" style="left:485px;top:332px;width:630px;height:1px;background:rgba(90,90,90,0.35)"></div><div class="r" style="left:485px;top:333px;width:89px;height:19px;background:#92b26b"></div><div class="t" style="left:492.0px;top:336.76px;font-size:13px;line-height:13px;color:#111;">$</div><div class="t" style="left:509.2px;top:336.76px;font-size:13px;line-height:13px;color:#111;">52,748.00</div><div class="r" style="left:574px;top:333px;width:88px;height:19px;background:#d49e67"></div><div class="t" style="left:580.6px;top:336.76px;font-size:13px;line-height:13px;color:#111;">$</div><div class="t" style="left:597.9px;top:336.76px;font-size:13px;line-height:13px;color:#111;">31,316.00</div><div class="r" style="left:662px;top:333px;width:88px;height:19px;background:#b7bc6d"></div><div class="t" style="left:669.3px;top:336.76px;font-size:13px;line-height:13px;color:#111;">$</div><div class="t" style="left:685.7px;top:336.76px;font-size:13px;line-height:13px;color:#111;">45,797.00</div><div class="r" style="left:750px;top:333px;width:89px;height:19px;background:#d27660"></div><div class="t" style="left:757.1px;top:336.76px;font-size:13px;line-height:13px;color:#111;">$</div><div class="t" style="left:774.2px;top:336.76px;font-size:13px;line-height:13px;color:#111;">22,432.00</div><div class="r" style="left:839px;top:333px;width:97px;height:19px;background:#8ab06a"></div><div class="t" style="left:845.6px;top:336.76px;font-size:13px;line-height:13px;color:#111;">$</div><div class="t" style="left:871.6px;top:336.76px;font-size:13px;line-height:13px;color:#111;">54,307.00</div><div class="r" style="left:936px;top:333px;width:88px;height:19px;background:#d6be6e"></div><div class="t" style="left:943.0px;top:336.76px;font-size:13px;line-height:13px;color:#111;">$</div><div class="t" style="left:960.0px;top:336.76px;font-size:13px;line-height:13px;color:#111;">38,462.00</div><div class="r" style="left:1024px;top:333px;width:95px;height:19px;background:#aab86c"></div><div class="t" style="left:1031.4px;top:336.76px;font-size:13px;line-height:13px;color:#111;">$</div><div class="t" style="left:1054.6px;top:336.76px;font-size:13px;line-height:13px;color:#111;">48,356.00</div><div class="r" style="left:485px;top:351px;width:630px;height:1px;background:rgba(90,90,90,0.35)"></div><div class="r" style="left:485px;top:352px;width:89px;height:18px;background:#9fb66c"></div><div class="t" style="left:492.0px;top:355.10px;font-size:13px;line-height:13px;color:#111;">$</div><div class="t" style="left:509.2px;top:355.10px;font-size:13px;line-height:13px;color:#111;">50,266.00</div><div class="r" style="left:574px;top:352px;width:88px;height:18px;background:#d05d5b"></div><div class="t" style="left:580.6px;top:355.10px;font-size:13px;line-height:13px;color:#111;">$</div><div class="t" style="left:597.9px;top:355.10px;font-size:13px;line-height:13px;color:#111;">16,893.00</div><div class="r" style="left:662px;top:352px;width:88px;height:18px;background:#acb96c"></div><div class="t" style="left:669.3px;top:355.10px;font-size:13px;line-height:13px;color:#111;">$</div><div class="t" style="left:685.7px;top:355.10px;font-size:13px;line-height:13px;color:#111;">47,825.00</div><div class="r" style="left:750px;top:352px;width:89px;height:18px;background:#89af6a"></div><div class="t" style="left:757.1px;top:355.10px;font-size:13px;line-height:13px;color:#111;">$</div><div class="t" style="left:774.2px;top:355.10px;font-size:13px;line-height:13px;color:#111;">54,507.00</div><div class="r" style="left:839px;top:352px;width:97px;height:18px;background:#69a668"></div><div class="t" style="left:845.6px;top:355.10px;font-size:13px;line-height:13px;color:#111;">$</div><div class="t" style="left:871.6px;top:355.10px;font-size:13px;line-height:13px;color:#111;">60,422.00</div><div class="r" style="left:936px;top:352px;width:88px;height:18px;background:#8aaf6a"></div><div class="t" style="left:943.0px;top:355.10px;font-size:13px;line-height:13px;color:#111;">$</div><div class="t" style="left:960.0px;top:355.10px;font-size:13px;line-height:13px;color:#111;">54,353.00</div><div class="r" style="left:1024px;top:352px;width:95px;height:18px;background:#d6c26f"></div><div class="t" style="left:1031.4px;top:355.10px;font-size:13px;line-height:13px;color:#111;">$</div><div class="t" style="left:1054.6px;top:355.10px;font-size:13px;line-height:13px;color:#111;">39,427.00</div><div class="r" style="left:485px;top:369px;width:630px;height:1px;background:rgba(90,90,90,0.35)"></div><div class="r" style="left:485px;top:370px;width:89px;height:18px;background:#d16f5e"></div><div class="t" style="left:492.0px;top:373.44px;font-size:13px;line-height:13px;color:#111;">$</div><div class="t" style="left:509.2px;top:373.44px;font-size:13px;line-height:13px;color:#111;">20,854.00</div><div class="r" style="left:574px;top:370px;width:88px;height:18px;background:#bebe6e"></div><div class="t" style="left:580.6px;top:373.44px;font-size:13px;line-height:13px;color:#111;">$</div><div class="t" style="left:597.9px;top:373.44px;font-size:13px;line-height:13px;color:#111;">44,437.00</div><div class="r" style="left:662px;top:370px;width:88px;height:18px;background:#d27a61"></div><div class="t" style="left:669.3px;top:373.44px;font-size:13px;line-height:13px;color:#111;">$</div><div class="t" style="left:685.7px;top:373.44px;font-size:13px;line-height:13px;color:#111;">23,310.00</div><div class="r" style="left:750px;top:370px;width:89px;height:18px;background:#d5bc6d"></div><div class="t" style="left:757.1px;top:373.44px;font-size:13px;line-height:13px;color:#111;">$</div><div class="t" style="left:774.2px;top:373.44px;font-size:13px;line-height:13px;color:#111;">37,951.00</div><div class="r" style="left:839px;top:370px;width:97px;height:18px;background:#a7b86c"></div><div class="t" style="left:845.6px;top:373.44px;font-size:13px;line-height:13px;color:#111;">$</div><div class="t" style="left:871.6px;top:373.44px;font-size:13px;line-height:13px;color:#111;">48,847.00</div><div class="r" style="left:936px;top:370px;width:88px;height:18px;background:#b4bc6d"></div><div class="t" style="left:943.0px;top:373.44px;font-size:13px;line-height:13px;color:#111;">$</div><div class="t" style="left:960.0px;top:373.44px;font-size:13px;line-height:13px;color:#111;">46,308.00</div><div class="r" style="left:1024px;top:370px;width:95px;height:18px;background:#d4a569"></div><div class="t" style="left:1031.4px;top:373.44px;font-size:13px;line-height:13px;color:#111;">$</div><div class="t" style="left:1054.6px;top:373.44px;font-size:13px;line-height:13px;color:#111;">32,912.00</div><div class="r" style="left:485px;top:387px;width:630px;height:1px;background:rgba(90,90,90,0.35)"></div><div class="r" style="left:485px;top:388px;width:89px;height:19px;background:#d1655d"></div><div class="t" style="left:492.0px;top:391.78px;font-size:13px;line-height:13px;color:#111;">$</div><div class="t" style="left:509.2px;top:391.78px;font-size:13px;line-height:13px;color:#111;">18,797.00</div><div class="r" style="left:574px;top:388px;width:88px;height:19px;background:#d27e61"></div><div class="t" style="left:580.6px;top:391.78px;font-size:13px;line-height:13px;color:#111;">$</div><div class="t" style="left:597.9px;top:391.78px;font-size:13px;line-height:13px;color:#111;">24,307.00</div><div class="r" style="left:662px;top:388px;width:88px;height:19px;background:#d6bc6d"></div><div class="t" style="left:669.3px;top:391.78px;font-size:13px;line-height:13px;color:#111;">$</div><div class="t" style="left:686.6px;top:391.78px;font-size:13px;line-height:13px;color:#111;">38,112.00</div><div class="r" style="left:750px;top:388px;width:89px;height:19px;background:#56a167"></div><div class="t" style="left:757.1px;top:391.78px;font-size:13px;line-height:13px;color:#111;">$</div><div class="t" style="left:774.2px;top:391.78px;font-size:13px;line-height:13px;color:#111;">64,000.00</div><div class="r" style="left:839px;top:388px;width:97px;height:19px;background:#d4a068"></div><div class="t" style="left:845.6px;top:391.78px;font-size:13px;line-height:13px;color:#111;">$</div><div class="t" style="left:871.6px;top:391.78px;font-size:13px;line-height:13px;color:#111;">31,679.00</div><div class="r" style="left:936px;top:388px;width:88px;height:19px;background:#d27f62"></div><div class="t" style="left:943.0px;top:391.78px;font-size:13px;line-height:13px;color:#111;">$</div><div class="t" style="left:960.0px;top:391.78px;font-size:13px;line-height:13px;color:#111;">24,522.00</div><div class="r" style="left:1024px;top:388px;width:95px;height:19px;background:#d49f68"></div><div class="t" style="left:1031.4px;top:391.78px;font-size:13px;line-height:13px;color:#111;">$</div><div class="t" style="left:1054.6px;top:391.78px;font-size:13px;line-height:13px;color:#111;">31,661.00</div><div class="r" style="left:485px;top:406px;width:630px;height:1px;background:rgba(90,90,90,0.35)"></div><div class="r" style="left:485px;top:407px;width:89px;height:18px;background:#7eac6a"></div><div class="t" style="left:492.0px;top:410.12px;font-size:13px;line-height:13px;color:#111;">$</div><div class="t" style="left:509.2px;top:410.12px;font-size:13px;line-height:13px;color:#111;">56,543.00</div><div class="r" style="left:574px;top:407px;width:88px;height:18px;background:#d5b36b"></div><div class="t" style="left:580.6px;top:410.12px;font-size:13px;line-height:13px;color:#111;">$</div><div class="t" style="left:597.9px;top:410.12px;font-size:13px;line-height:13px;color:#111;">35,937.00</div><div class="r" style="left:662px;top:407px;width:88px;height:18px;background:#d39466"></div><div class="t" style="left:669.3px;top:410.12px;font-size:13px;line-height:13px;color:#111;">$</div><div class="t" style="left:685.7px;top:410.12px;font-size:13px;line-height:13px;color:#111;">29,214.00</div><div class="r" style="left:750px;top:407px;width:89px;height:18px;background:#d5ae6b"></div><div class="t" style="left:757.1px;top:410.12px;font-size:13px;line-height:13px;color:#111;">$</div><div class="t" style="left:774.2px;top:410.12px;font-size:13px;line-height:13px;color:#111;">34,817.00</div><div class="r" style="left:839px;top:407px;width:97px;height:18px;background:#d4a769"></div><div class="t" style="left:845.6px;top:410.12px;font-size:13px;line-height:13px;color:#111;">$</div><div class="t" style="left:871.6px;top:410.12px;font-size:13px;line-height:13px;color:#111;">33,357.00</div><div class="r" style="left:936px;top:407px;width:88px;height:18px;background:#a3b76c"></div><div class="t" style="left:943.0px;top:410.12px;font-size:13px;line-height:13px;color:#111;">$</div><div class="t" style="left:960.0px;top:410.12px;font-size:13px;line-height:13px;color:#111;">49,559.00</div><div class="r" style="left:1024px;top:407px;width:95px;height:18px;background:#afba6d"></div><div class="t" style="left:1031.4px;top:410.12px;font-size:13px;line-height:13px;color:#111;">$</div><div class="t" style="left:1054.6px;top:410.12px;font-size:13px;line-height:13px;color:#111;">47,399.00</div><div class="r" style="left:485px;top:424px;width:630px;height:1px;background:rgba(90,90,90,0.35)"></div><div class="r" style="left:485px;top:425px;width:89px;height:18px;background:#99b46b"></div><div class="t" style="left:492.0px;top:428.46px;font-size:13px;line-height:13px;color:#111;">$</div><div class="t" style="left:509.2px;top:428.46px;font-size:13px;line-height:13px;color:#111;">51,458.00</div><div class="r" style="left:574px;top:425px;width:88px;height:18px;background:#98b46b"></div><div class="t" style="left:580.6px;top:428.46px;font-size:13px;line-height:13px;color:#111;">$</div><div class="t" style="left:597.9px;top:428.46px;font-size:13px;line-height:13px;color:#111;">51,597.00</div><div class="r" style="left:662px;top:425px;width:88px;height:18px;background:#5da368"></div><div class="t" style="left:669.3px;top:428.46px;font-size:13px;line-height:13px;color:#111;">$</div><div class="t" style="left:685.7px;top:428.46px;font-size:13px;line-height:13px;color:#111;">62,788.00</div><div class="r" style="left:750px;top:425px;width:89px;height:18px;background:#d5aa6a"></div><div class="t" style="left:757.1px;top:428.46px;font-size:13px;line-height:13px;color:#111;">$</div><div class="t" style="left:774.2px;top:428.46px;font-size:13px;line-height:13px;color:#111;">33,991.00</div><div class="r" style="left:839px;top:425px;width:97px;height:18px;background:#85ae6a"></div><div class="t" style="left:845.6px;top:428.46px;font-size:13px;line-height:13px;color:#111;">$</div><div class="t" style="left:871.6px;top:428.46px;font-size:13px;line-height:13px;color:#111;">55,232.00</div><div class="r" style="left:936px;top:425px;width:88px;height:18px;background:#d5af6b"></div><div class="t" style="left:943.0px;top:428.46px;font-size:13px;line-height:13px;color:#111;">$</div><div class="t" style="left:960.0px;top:428.46px;font-size:13px;line-height:13px;color:#111;">35,154.00</div><div class="r" style="left:1024px;top:425px;width:95px;height:18px;background:#d4a368"></div><div class="t" style="left:1031.4px;top:428.46px;font-size:13px;line-height:13px;color:#111;">$</div><div class="t" style="left:1054.6px;top:428.46px;font-size:13px;line-height:13px;color:#111;">32,404.00</div><div class="r" style="left:485px;top:442px;width:630px;height:1px;background:rgba(90,90,90,0.35)"></div><div class="r" style="left:485px;top:443px;width:89px;height:19px;background:#d27960"></div><div class="t" style="left:492.0px;top:446.80px;font-size:13px;line-height:13px;color:#111;">$</div><div class="t" style="left:509.2px;top:446.80px;font-size:13px;line-height:13px;color:#111;">23,231.00</div><div class="r" style="left:574px;top:443px;width:88px;height:19px;background:#d28362"></div><div class="t" style="left:580.6px;top:446.80px;font-size:13px;line-height:13px;color:#111;">$</div><div class="t" style="left:597.9px;top:446.80px;font-size:13px;line-height:13px;color:#111;">25,280.00</div><div class="r" style="left:662px;top:443px;width:88px;height:19px;background:#d38e64"></div><div class="t" style="left:669.3px;top:446.80px;font-size:13px;line-height:13px;color:#111;">$</div><div class="t" style="left:685.7px;top:446.80px;font-size:13px;line-height:13px;color:#111;">27,787.00</div><div class="r" style="left:750px;top:443px;width:89px;height:19px;background:#d4a669"></div><div class="t" style="left:757.1px;top:446.80px;font-size:13px;line-height:13px;color:#111;">$</div><div class="t" style="left:774.2px;top:446.80px;font-size:13px;line-height:13px;color:#111;">33,127.00</div><div class="r" style="left:839px;top:443px;width:97px;height:19px;background:#d27a61"></div><div class="t" style="left:845.6px;top:446.80px;font-size:13px;line-height:13px;color:#111;">$</div><div class="t" style="left:871.6px;top:446.80px;font-size:13px;line-height:13px;color:#111;">23,335.00</div><div class="r" style="left:936px;top:443px;width:88px;height:19px;background:#d5ae6b"></div><div class="t" style="left:943.0px;top:446.80px;font-size:13px;line-height:13px;color:#111;">$</div><div class="t" style="left:960.0px;top:446.80px;font-size:13px;line-height:13px;color:#111;">34,872.00</div><div class="r" style="left:1024px;top:443px;width:95px;height:19px;background:#d39666"></div><div class="t" style="left:1031.4px;top:446.80px;font-size:13px;line-height:13px;color:#111;">$</div><div class="t" style="left:1054.6px;top:446.80px;font-size:13px;line-height:13px;color:#111;">29,457.00</div><div class="r" style="left:485px;top:461px;width:630px;height:1px;background:rgba(90,90,90,0.35)"></div><div class="r" style="left:485px;top:529px;width:89px;height:18px;background:#3763a0"></div><div class="r" style="left:556px;top:529px;width:18px;height:18px;background:#d2d2d2;box-shadow:inset 0 0 0 1px #c4c4c4"></div><svg class="r" style="left:561px;top:536px" width="8" height="5" viewBox="0 0 8 5" fill="none"><path d="M0 0h8L4 4.5z" fill="#3c3c3c"/></svg><div class="t" style="left:488.5px;top:532.40px;font-size:13px;line-height:13px;font-weight:bold;color:#e9eef6;">May</div><div class="r" style="left:574px;top:529px;width:88px;height:18px;background:#3763a0"></div><div class="r" style="left:644px;top:529px;width:18px;height:18px;background:#d2d2d2;box-shadow:inset 0 0 0 1px #c4c4c4"></div><svg class="r" style="left:649px;top:536px" width="8" height="5" viewBox="0 0 8 5" fill="none"><path d="M0 0h8L4 4.5z" fill="#3c3c3c"/></svg><div class="t" style="left:577.1px;top:532.40px;font-size:13px;line-height:13px;font-weight:bold;color:#e9eef6;">June</div><div class="r" style="left:662px;top:529px;width:88px;height:18px;background:#3763a0"></div><div class="r" style="left:732px;top:529px;width:18px;height:18px;background:#d2d2d2;box-shadow:inset 0 0 0 1px #c4c4c4"></div><svg class="r" style="left:737px;top:536px" width="8" height="5" viewBox="0 0 8 5" fill="none"><path d="M0 0h8L4 4.5z" fill="#3c3c3c"/></svg><div class="t" style="left:665.8px;top:532.40px;font-size:13px;line-height:13px;font-weight:bold;color:#e9eef6;">July</div><div class="r" style="left:750px;top:529px;width:89px;height:18px;background:#3763a0"></div><div class="r" style="left:821px;top:529px;width:18px;height:18px;background:#d2d2d2;box-shadow:inset 0 0 0 1px #c4c4c4"></div><svg class="r" style="left:826px;top:536px" width="8" height="5" viewBox="0 0 8 5" fill="none"><path d="M0 0h8L4 4.5z" fill="#3c3c3c"/></svg><div class="t" style="left:753.6px;top:532.40px;font-size:13px;line-height:13px;font-weight:bold;color:#e9eef6;">August</div><div class="r" style="left:839px;top:529px;width:97px;height:18px;background:#3763a0"></div><div class="r" style="left:918px;top:529px;width:18px;height:18px;background:#d2d2d2;box-shadow:inset 0 0 0 1px #c4c4c4"></div><svg class="r" style="left:923px;top:536px" width="8" height="5" viewBox="0 0 8 5" fill="none"><path d="M0 0h8L4 4.5z" fill="#3c3c3c"/></svg><div class="t" style="left:842.1px;top:532.40px;font-size:13px;line-height:13px;font-weight:bold;color:#e9eef6;">September</div><div class="r" style="left:936px;top:529px;width:88px;height:18px;background:#3763a0"></div><div class="r" style="left:1006px;top:529px;width:18px;height:18px;background:#d2d2d2;box-shadow:inset 0 0 0 1px #c4c4c4"></div><svg class="r" style="left:1011px;top:536px" width="8" height="5" viewBox="0 0 8 5" fill="none"><path d="M0 0h8L4 4.5z" fill="#3c3c3c"/></svg><div class="t" style="left:939.5px;top:532.40px;font-size:13px;line-height:13px;font-weight:bold;color:#e9eef6;">October</div><div class="r" style="left:1024px;top:529px;width:95px;height:18px;background:#3763a0"></div><div class="r" style="left:1101px;top:529px;width:18px;height:18px;background:#d2d2d2;box-shadow:inset 0 0 0 1px #c4c4c4"></div><svg class="r" style="left:1106px;top:536px" width="8" height="5" viewBox="0 0 8 5" fill="none"><path d="M0 0h8L4 4.5z" fill="#3c3c3c"/></svg><div class="t" style="left:1027.9px;top:532.40px;font-size:13px;line-height:13px;font-weight:bold;color:#e9eef6;">November</div><div class="r" style="left:485px;top:547px;width:89px;height:18px;background:#d3d3d3;box-shadow:inset 1px 0 0 #e4e4e4"></div><div class="r" style="left:486px;top:548px;width:13.0px;height:15px;background:linear-gradient(90deg,#53a067 0%,#becac1 100%)"></div><div class="t" style="left:492.0px;top:551.02px;font-size:13px;line-height:13px;color:#111;">$</div><div class="t" style="left:516.4px;top:551.02px;font-size:13px;line-height:13px;color:#111;">3,563.00</div><div class="r" style="left:574px;top:547px;width:88px;height:18px;background:#d3d3d3;box-shadow:inset 1px 0 0 #e4e4e4"></div><div class="r" style="left:575px;top:548px;width:9.8px;height:15px;background:linear-gradient(90deg,#53a067 0%,#becac1 100%)"></div><div class="t" style="left:580.6px;top:551.02px;font-size:13px;line-height:13px;color:#111;">$</div><div class="t" style="left:605.1px;top:551.02px;font-size:13px;line-height:13px;color:#111;">3,122.00</div><div class="r" style="left:662px;top:547px;width:88px;height:18px;background:#d3d3d3;box-shadow:inset 1px 0 0 #e4e4e4"></div><div class="r" style="left:663px;top:548px;width:59.6px;height:15px;background:linear-gradient(90deg,#53a067 0%,#becac1 100%)"></div><div class="t" style="left:669.3px;top:551.02px;font-size:13px;line-height:13px;color:#111;">$</div><div class="t" style="left:685.7px;top:551.02px;font-size:13px;line-height:13px;color:#111;">10,074.00</div><div class="r" style="left:750px;top:547px;width:89px;height:18px;background:#d3d3d3;box-shadow:inset 1px 0 0 #e4e4e4"></div><div class="r" style="left:751px;top:548px;width:13.7px;height:15px;background:linear-gradient(90deg,#53a067 0%,#becac1 100%)"></div><div class="t" style="left:757.1px;top:551.02px;font-size:13px;line-height:13px;color:#111;">$</div><div class="t" style="left:781.4px;top:551.02px;font-size:13px;line-height:13px;color:#111;">3,653.00</div><div class="r" style="left:839px;top:547px;width:97px;height:18px;background:#d3d3d3;box-shadow:inset 1px 0 0 #e4e4e4"></div><div class="r" style="left:840px;top:548px;width:2.2px;height:15px;background:linear-gradient(90deg,#53a067 0%,#becac1 100%)"></div><div class="t" style="left:845.6px;top:551.02px;font-size:13px;line-height:13px;color:#111;">$</div><div class="t" style="left:878.8px;top:551.02px;font-size:13px;line-height:13px;color:#111;">2,040.00</div><div class="r" style="left:936px;top:547px;width:88px;height:18px;background:#d3d3d3;box-shadow:inset 1px 0 0 #e4e4e4"></div><div class="r" style="left:937px;top:548px;width:40.3px;height:15px;background:linear-gradient(90deg,#53a067 0%,#becac1 100%)"></div><div class="t" style="left:943.0px;top:551.02px;font-size:13px;line-height:13px;color:#111;">$</div><div class="t" style="left:967.2px;top:551.02px;font-size:13px;line-height:13px;color:#111;">7,344.00</div><div class="r" style="left:1024px;top:547px;width:95px;height:18px;background:#d3d3d3;box-shadow:inset 1px 0 0 #e4e4e4"></div><div class="r" style="left:1025px;top:548px;width:27.6px;height:15px;background:linear-gradient(90deg,#53a067 0%,#becac1 100%)"></div><div class="t" style="left:1031.4px;top:551.02px;font-size:13px;line-height:13px;color:#111;">$</div><div class="t" style="left:1061.8px;top:551.02px;font-size:13px;line-height:13px;color:#111;">5,326.00</div><div class="r" style="left:485px;top:565px;width:89px;height:18px;background:#d3d3d3;box-shadow:inset 1px 0 0 #e4e4e4"></div><div class="r" style="left:486px;top:566px;width:63.2px;height:15px;background:linear-gradient(90deg,#53a067 0%,#becac1 100%)"></div><div class="t" style="left:492.0px;top:569.34px;font-size:13px;line-height:13px;color:#111;">$</div><div class="t" style="left:509.2px;top:569.34px;font-size:13px;line-height:13px;color:#111;">10,485.00</div><div class="r" style="left:574px;top:565px;width:88px;height:18px;background:#d3d3d3;box-shadow:inset 1px 0 0 #e4e4e4"></div><div class="r" style="left:575px;top:566px;width:67.7px;height:15px;background:linear-gradient(90deg,#53a067 0%,#becac1 100%)"></div><div class="t" style="left:580.6px;top:569.34px;font-size:13px;line-height:13px;color:#111;">$</div><div class="t" style="left:598.8px;top:569.34px;font-size:13px;line-height:13px;color:#111;">11,096.00</div><div class="r" style="left:662px;top:565px;width:88px;height:18px;background:#d3d3d3;box-shadow:inset 1px 0 0 #e4e4e4"></div><div class="r" style="left:663px;top:566px;width:28.8px;height:15px;background:linear-gradient(90deg,#53a067 0%,#becac1 100%)"></div><div class="t" style="left:669.3px;top:569.34px;font-size:13px;line-height:13px;color:#111;">$</div><div class="t" style="left:692.9px;top:569.34px;font-size:13px;line-height:13px;color:#111;">5,772.00</div><div class="r" style="left:750px;top:565px;width:89px;height:18px;background:#d3d3d3;box-shadow:inset 1px 0 0 #e4e4e4"></div><div class="r" style="left:751px;top:566px;width:57.7px;height:15px;background:linear-gradient(90deg,#53a067 0%,#becac1 100%)"></div><div class="t" style="left:757.1px;top:569.34px;font-size:13px;line-height:13px;color:#111;">$</div><div class="t" style="left:781.4px;top:569.34px;font-size:13px;line-height:13px;color:#111;">9,733.00</div><div class="r" style="left:839px;top:565px;width:97px;height:18px;background:#d3d3d3;box-shadow:inset 1px 0 0 #e4e4e4"></div><div class="r" style="left:840px;top:566px;width:7.8px;height:15px;background:linear-gradient(90deg,#53a067 0%,#becac1 100%)"></div><div class="t" style="left:845.6px;top:569.34px;font-size:13px;line-height:13px;color:#111;">$</div><div class="t" style="left:878.8px;top:569.34px;font-size:13px;line-height:13px;color:#111;">2,746.00</div><div class="r" style="left:936px;top:565px;width:88px;height:18px;background:#d3d3d3;box-shadow:inset 1px 0 0 #e4e4e4"></div><div class="r" style="left:937px;top:566px;width:44.9px;height:15px;background:linear-gradient(90deg,#53a067 0%,#becac1 100%)"></div><div class="t" style="left:943.0px;top:569.34px;font-size:13px;line-height:13px;color:#111;">$</div><div class="t" style="left:967.2px;top:569.34px;font-size:13px;line-height:13px;color:#111;">7,972.00</div><div class="r" style="left:1024px;top:565px;width:95px;height:18px;background:#d3d3d3;box-shadow:inset 1px 0 0 #e4e4e4"></div><div class="r" style="left:1025px;top:566px;width:13.5px;height:15px;background:linear-gradient(90deg,#53a067 0%,#becac1 100%)"></div><div class="t" style="left:1031.4px;top:569.34px;font-size:13px;line-height:13px;color:#111;">$</div><div class="t" style="left:1061.8px;top:569.34px;font-size:13px;line-height:13px;color:#111;">3,513.00</div><div class="r" style="left:485px;top:583px;width:89px;height:19px;background:#d3d3d3;box-shadow:inset 1px 0 0 #e4e4e4"></div><div class="r" style="left:486px;top:584px;width:40.8px;height:16px;background:linear-gradient(90deg,#53a067 0%,#becac1 100%)"></div><div class="t" style="left:492.0px;top:587.66px;font-size:13px;line-height:13px;color:#111;">$</div><div class="t" style="left:516.4px;top:587.66px;font-size:13px;line-height:13px;color:#111;">7,391.00</div><div class="r" style="left:574px;top:583px;width:88px;height:19px;background:#d3d3d3;box-shadow:inset 1px 0 0 #e4e4e4"></div><div class="t" style="left:580.6px;top:587.66px;font-size:13px;line-height:13px;color:#111;">$</div><div class="t" style="left:605.1px;top:587.66px;font-size:13px;line-height:13px;color:#111;">1,765.00</div><div class="r" style="left:662px;top:583px;width:88px;height:19px;background:#d3d3d3;box-shadow:inset 1px 0 0 #e4e4e4"></div><div class="r" style="left:663px;top:584px;width:37.1px;height:16px;background:linear-gradient(90deg,#53a067 0%,#becac1 100%)"></div><div class="t" style="left:669.3px;top:587.66px;font-size:13px;line-height:13px;color:#111;">$</div><div class="t" style="left:692.9px;top:587.66px;font-size:13px;line-height:13px;color:#111;">6,927.00</div><div class="r" style="left:750px;top:583px;width:89px;height:19px;background:#d3d3d3;box-shadow:inset 1px 0 0 #e4e4e4"></div><div class="r" style="left:751px;top:584px;width:63.3px;height:16px;background:linear-gradient(90deg,#53a067 0%,#becac1 100%)"></div><div class="t" style="left:757.1px;top:587.66px;font-size:13px;line-height:13px;color:#111;">$</div><div class="t" style="left:774.2px;top:587.66px;font-size:13px;line-height:13px;color:#111;">10,517.00</div><div class="r" style="left:839px;top:583px;width:97px;height:19px;background:#d3d3d3;box-shadow:inset 1px 0 0 #e4e4e4"></div><div class="r" style="left:840px;top:584px;width:48.2px;height:16px;background:linear-gradient(90deg,#53a067 0%,#becac1 100%)"></div><div class="t" style="left:845.6px;top:587.66px;font-size:13px;line-height:13px;color:#111;">$</div><div class="t" style="left:879.8px;top:587.66px;font-size:13px;line-height:13px;color:#111;">7,811.00</div><div class="r" style="left:936px;top:583px;width:88px;height:19px;background:#d3d3d3;box-shadow:inset 1px 0 0 #e4e4e4"></div><div class="r" style="left:937px;top:584px;width:79.1px;height:16px;background:linear-gradient(90deg,#53a067 0%,#becac1 100%)"></div><div class="t" style="left:943.0px;top:587.66px;font-size:13px;line-height:13px;color:#111;">$</div><div class="t" style="left:960.0px;top:587.66px;font-size:13px;line-height:13px;color:#111;">12,707.00</div><div class="r" style="left:1024px;top:583px;width:95px;height:19px;background:#d3d3d3;box-shadow:inset 1px 0 0 #e4e4e4"></div><div class="r" style="left:1025px;top:584px;width:63.4px;height:16px;background:linear-gradient(90deg,#53a067 0%,#becac1 100%)"></div><div class="t" style="left:1031.4px;top:587.66px;font-size:13px;line-height:13px;color:#111;">$</div><div class="t" style="left:1061.8px;top:587.66px;font-size:13px;line-height:13px;color:#111;">9,956.00</div><div class="r" style="left:485px;top:602px;width:89px;height:18px;background:#d3d3d3;box-shadow:inset 1px 0 0 #e4e4e4"></div><div class="r" style="left:486px;top:603px;width:27.2px;height:15px;background:linear-gradient(90deg,#53a067 0%,#becac1 100%)"></div><div class="t" style="left:492.0px;top:605.98px;font-size:13px;line-height:13px;color:#111;">$</div><div class="t" style="left:516.4px;top:605.98px;font-size:13px;line-height:13px;color:#111;">5,524.00</div><div class="r" style="left:574px;top:602px;width:88px;height:18px;background:#d3d3d3;box-shadow:inset 1px 0 0 #e4e4e4"></div><div class="r" style="left:575px;top:603px;width:34.7px;height:15px;background:linear-gradient(90deg,#53a067 0%,#becac1 100%)"></div><div class="t" style="left:580.6px;top:605.98px;font-size:13px;line-height:13px;color:#111;">$</div><div class="t" style="left:605.1px;top:605.98px;font-size:13px;line-height:13px;color:#111;">6,549.00</div><div class="r" style="left:662px;top:602px;width:88px;height:18px;background:#d3d3d3;box-shadow:inset 1px 0 0 #e4e4e4"></div><div class="r" style="left:663px;top:603px;width:47.3px;height:15px;background:linear-gradient(90deg,#53a067 0%,#becac1 100%)"></div><div class="t" style="left:669.3px;top:605.98px;font-size:13px;line-height:13px;color:#111;">$</div><div class="t" style="left:692.9px;top:605.98px;font-size:13px;line-height:13px;color:#111;">8,361.00</div><div class="r" style="left:750px;top:602px;width:89px;height:18px;background:#d3d3d3;box-shadow:inset 1px 0 0 #e4e4e4"></div><div class="r" style="left:751px;top:603px;width:17.1px;height:15px;background:linear-gradient(90deg,#53a067 0%,#becac1 100%)"></div><div class="t" style="left:757.1px;top:605.98px;font-size:13px;line-height:13px;color:#111;">$</div><div class="t" style="left:781.4px;top:605.98px;font-size:13px;line-height:13px;color:#111;">4,125.00</div><div class="r" style="left:839px;top:602px;width:97px;height:18px;background:#d3d3d3;box-shadow:inset 1px 0 0 #e4e4e4"></div><div class="r" style="left:840px;top:603px;width:59.5px;height:15px;background:linear-gradient(90deg,#53a067 0%,#becac1 100%)"></div><div class="t" style="left:845.6px;top:605.98px;font-size:13px;line-height:13px;color:#111;">$</div><div class="t" style="left:878.8px;top:605.98px;font-size:13px;line-height:13px;color:#111;">9,233.00</div><div class="r" style="left:936px;top:602px;width:88px;height:18px;background:#d3d3d3;box-shadow:inset 1px 0 0 #e4e4e4"></div><div class="r" style="left:937px;top:603px;width:36.9px;height:15px;background:linear-gradient(90deg,#53a067 0%,#becac1 100%)"></div><div class="t" style="left:943.0px;top:605.98px;font-size:13px;line-height:13px;color:#111;">$</div><div class="t" style="left:967.2px;top:605.98px;font-size:13px;line-height:13px;color:#111;">6,868.00</div><div class="r" style="left:1024px;top:602px;width:95px;height:18px;background:#d3d3d3;box-shadow:inset 1px 0 0 #e4e4e4"></div><div class="r" style="left:1025px;top:603px;width:35.5px;height:15px;background:linear-gradient(90deg,#53a067 0%,#becac1 100%)"></div><div class="t" style="left:1031.4px;top:605.98px;font-size:13px;line-height:13px;color:#111;">$</div><div class="t" style="left:1061.8px;top:605.98px;font-size:13px;line-height:13px;color:#111;">6,345.00</div><div class="r" style="left:485px;top:620px;width:89px;height:18px;background:#d3d3d3;box-shadow:inset 1px 0 0 #e4e4e4"></div><div class="r" style="left:486px;top:621px;width:45.2px;height:15px;background:linear-gradient(90deg,#53a067 0%,#becac1 100%)"></div><div class="t" style="left:492.0px;top:624.30px;font-size:13px;line-height:13px;color:#111;">$</div><div class="t" style="left:516.4px;top:624.30px;font-size:13px;line-height:13px;color:#111;">8,000.00</div><div class="r" style="left:574px;top:620px;width:88px;height:18px;background:#d3d3d3;box-shadow:inset 1px 0 0 #e4e4e4"></div><div class="r" style="left:575px;top:621px;width:3.1px;height:15px;background:linear-gradient(90deg,#53a067 0%,#becac1 100%)"></div><div class="t" style="left:580.6px;top:624.30px;font-size:13px;line-height:13px;color:#111;">$</div><div class="t" style="left:605.1px;top:624.30px;font-size:13px;line-height:13px;color:#111;">2,195.00</div><div class="r" style="left:662px;top:620px;width:88px;height:18px;background:#d3d3d3;box-shadow:inset 1px 0 0 #e4e4e4"></div><div class="r" style="left:663px;top:621px;width:64.8px;height:15px;background:linear-gradient(90deg,#53a067 0%,#becac1 100%)"></div><div class="t" style="left:669.3px;top:624.30px;font-size:13px;line-height:13px;color:#111;">$</div><div class="t" style="left:685.7px;top:624.30px;font-size:13px;line-height:13px;color:#111;">10,794.00</div><div class="r" style="left:750px;top:620px;width:89px;height:18px;background:#d3d3d3;box-shadow:inset 1px 0 0 #e4e4e4"></div><div class="r" style="left:751px;top:621px;width:46.0px;height:15px;background:linear-gradient(90deg,#53a067 0%,#becac1 100%)"></div><div class="t" style="left:757.1px;top:624.30px;font-size:13px;line-height:13px;color:#111;">$</div><div class="t" style="left:782.4px;top:624.30px;font-size:13px;line-height:13px;color:#111;">8,119.00</div><div class="r" style="left:839px;top:620px;width:97px;height:18px;background:#d3d3d3;box-shadow:inset 1px 0 0 #e4e4e4"></div><div class="r" style="left:840px;top:621px;width:74.6px;height:15px;background:linear-gradient(90deg,#53a067 0%,#becac1 100%)"></div><div class="t" style="left:845.6px;top:624.30px;font-size:13px;line-height:13px;color:#111;">$</div><div class="t" style="left:872.5px;top:624.30px;font-size:13px;line-height:13px;color:#111;">11,126.00</div><div class="r" style="left:936px;top:620px;width:88px;height:18px;background:#d3d3d3;box-shadow:inset 1px 0 0 #e4e4e4"></div><div class="r" style="left:937px;top:621px;width:71.5px;height:15px;background:linear-gradient(90deg,#53a067 0%,#becac1 100%)"></div><div class="t" style="left:943.0px;top:624.30px;font-size:13px;line-height:13px;color:#111;">$</div><div class="t" style="left:960.9px;top:624.30px;font-size:13px;line-height:13px;color:#111;">11,654.00</div><div class="r" style="left:1024px;top:620px;width:95px;height:18px;background:#d3d3d3;box-shadow:inset 1px 0 0 #e4e4e4"></div><div class="r" style="left:1025px;top:621px;width:51.9px;height:15px;background:linear-gradient(90deg,#53a067 0%,#becac1 100%)"></div><div class="t" style="left:1031.4px;top:624.30px;font-size:13px;line-height:13px;color:#111;">$</div><div class="t" style="left:1061.8px;top:624.30px;font-size:13px;line-height:13px;color:#111;">8,465.00</div><div class="r" style="left:485px;top:638px;width:89px;height:19px;background:#d3d3d3;box-shadow:inset 1px 0 0 #e4e4e4"></div><div class="r" style="left:486px;top:639px;width:12.3px;height:16px;background:linear-gradient(90deg,#53a067 0%,#becac1 100%)"></div><div class="t" style="left:492.0px;top:642.62px;font-size:13px;line-height:13px;color:#111;">$</div><div class="t" style="left:516.4px;top:642.62px;font-size:13px;line-height:13px;color:#111;">3,465.00</div><div class="r" style="left:574px;top:638px;width:88px;height:19px;background:#d3d3d3;box-shadow:inset 1px 0 0 #e4e4e4"></div><div class="r" style="left:575px;top:639px;width:19.5px;height:16px;background:linear-gradient(90deg,#53a067 0%,#becac1 100%)"></div><div class="t" style="left:580.6px;top:642.62px;font-size:13px;line-height:13px;color:#111;">$</div><div class="t" style="left:605.1px;top:642.62px;font-size:13px;line-height:13px;color:#111;">4,454.00</div><div class="r" style="left:662px;top:638px;width:88px;height:19px;background:#d3d3d3;box-shadow:inset 1px 0 0 #e4e4e4"></div><div class="r" style="left:663px;top:639px;width:21.5px;height:16px;background:linear-gradient(90deg,#53a067 0%,#becac1 100%)"></div><div class="t" style="left:669.3px;top:642.62px;font-size:13px;line-height:13px;color:#111;">$</div><div class="t" style="left:692.9px;top:642.62px;font-size:13px;line-height:13px;color:#111;">4,761.00</div><div class="r" style="left:750px;top:638px;width:89px;height:19px;background:#d3d3d3;box-shadow:inset 1px 0 0 #e4e4e4"></div><div class="r" style="left:751px;top:639px;width:27.5px;height:16px;background:linear-gradient(90deg,#53a067 0%,#becac1 100%)"></div><div class="t" style="left:757.1px;top:642.62px;font-size:13px;line-height:13px;color:#111;">$</div><div class="t" style="left:781.4px;top:642.62px;font-size:13px;line-height:13px;color:#111;">5,567.00</div><div class="r" style="left:839px;top:638px;width:97px;height:19px;background:#d3d3d3;box-shadow:inset 1px 0 0 #e4e4e4"></div><div class="r" style="left:840px;top:639px;width:28.2px;height:16px;background:linear-gradient(90deg,#53a067 0%,#becac1 100%)"></div><div class="t" style="left:845.6px;top:642.62px;font-size:13px;line-height:13px;color:#111;">$</div><div class="t" style="left:878.8px;top:642.62px;font-size:13px;line-height:13px;color:#111;">5,305.00</div><div class="r" style="left:936px;top:638px;width:88px;height:19px;background:#d3d3d3;box-shadow:inset 1px 0 0 #e4e4e4"></div><div class="r" style="left:937px;top:639px;width:61.2px;height:16px;background:linear-gradient(90deg,#53a067 0%,#becac1 100%)"></div><div class="t" style="left:943.0px;top:642.62px;font-size:13px;line-height:13px;color:#111;">$</div><div class="t" style="left:960.0px;top:642.62px;font-size:13px;line-height:13px;color:#111;">10,230.00</div><div class="r" style="left:1024px;top:638px;width:95px;height:19px;background:#d3d3d3;box-shadow:inset 1px 0 0 #e4e4e4"></div><div class="r" style="left:1025px;top:639px;width:29.6px;height:16px;background:linear-gradient(90deg,#53a067 0%,#becac1 100%)"></div><div class="t" style="left:1031.4px;top:642.62px;font-size:13px;line-height:13px;color:#111;">$</div><div class="t" style="left:1061.8px;top:642.62px;font-size:13px;line-height:13px;color:#111;">5,584.00</div><div class="r" style="left:485px;top:657px;width:89px;height:18px;background:#d3d3d3;box-shadow:inset 1px 0 0 #e4e4e4"></div><div class="r" style="left:486px;top:658px;width:10.2px;height:15px;background:linear-gradient(90deg,#53a067 0%,#becac1 100%)"></div><div class="t" style="left:492.0px;top:660.94px;font-size:13px;line-height:13px;color:#111;">$</div><div class="t" style="left:516.4px;top:660.94px;font-size:13px;line-height:13px;color:#111;">3,169.00</div><div class="r" style="left:574px;top:657px;width:88px;height:18px;background:#d3d3d3;box-shadow:inset 1px 0 0 #e4e4e4"></div><div class="r" style="left:575px;top:658px;width:15.6px;height:15px;background:linear-gradient(90deg,#53a067 0%,#becac1 100%)"></div><div class="t" style="left:580.6px;top:660.94px;font-size:13px;line-height:13px;color:#111;">$</div><div class="t" style="left:605.1px;top:660.94px;font-size:13px;line-height:13px;color:#111;">3,912.00</div><div class="r" style="left:662px;top:657px;width:88px;height:18px;background:#d3d3d3;box-shadow:inset 1px 0 0 #e4e4e4"></div><div class="r" style="left:663px;top:658px;width:46.7px;height:15px;background:linear-gradient(90deg,#53a067 0%,#becac1 100%)"></div><div class="t" style="left:669.3px;top:660.94px;font-size:13px;line-height:13px;color:#111;">$</div><div class="t" style="left:692.9px;top:660.94px;font-size:13px;line-height:13px;color:#111;">8,265.00</div><div class="r" style="left:750px;top:657px;width:89px;height:18px;background:#d3d3d3;box-shadow:inset 1px 0 0 #e4e4e4"></div><div class="r" style="left:751px;top:658px;width:55.4px;height:15px;background:linear-gradient(90deg,#53a067 0%,#becac1 100%)"></div><div class="t" style="left:757.1px;top:660.94px;font-size:13px;line-height:13px;color:#111;">$</div><div class="t" style="left:781.4px;top:660.94px;font-size:13px;line-height:13px;color:#111;">9,425.00</div><div class="r" style="left:839px;top:657px;width:97px;height:18px;background:#d3d3d3;box-shadow:inset 1px 0 0 #e4e4e4"></div><div class="r" style="left:840px;top:658px;width:26.6px;height:15px;background:linear-gradient(90deg,#53a067 0%,#becac1 100%)"></div><div class="t" style="left:845.6px;top:660.94px;font-size:13px;line-height:13px;color:#111;">$</div><div class="t" style="left:878.8px;top:660.94px;font-size:13px;line-height:13px;color:#111;">5,104.00</div><div class="r" style="left:936px;top:657px;width:88px;height:18px;background:#d3d3d3;box-shadow:inset 1px 0 0 #e4e4e4"></div><div class="r" style="left:937px;top:658px;width:20.0px;height:15px;background:linear-gradient(90deg,#53a067 0%,#becac1 100%)"></div><div class="t" style="left:943.0px;top:660.94px;font-size:13px;line-height:13px;color:#111;">$</div><div class="t" style="left:967.2px;top:660.94px;font-size:13px;line-height:13px;color:#111;">4,528.00</div><div class="r" style="left:1024px;top:657px;width:95px;height:18px;background:#d3d3d3;box-shadow:inset 1px 0 0 #e4e4e4"></div><div class="r" style="left:1025px;top:658px;width:37.0px;height:15px;background:linear-gradient(90deg,#53a067 0%,#becac1 100%)"></div><div class="t" style="left:1031.4px;top:660.94px;font-size:13px;line-height:13px;color:#111;">$</div><div class="t" style="left:1061.8px;top:660.94px;font-size:13px;line-height:13px;color:#111;">6,546.00</div><div class="r" style="left:485px;top:675px;width:89px;height:18px;background:#d3d3d3;box-shadow:inset 1px 0 0 #e4e4e4"></div><div class="r" style="left:486px;top:676px;width:66.6px;height:15px;background:linear-gradient(90deg,#53a067 0%,#becac1 100%)"></div><div class="t" style="left:492.0px;top:679.26px;font-size:13px;line-height:13px;color:#111;">$</div><div class="t" style="left:509.2px;top:679.26px;font-size:13px;line-height:13px;color:#111;">10,960.00</div><div class="r" style="left:574px;top:675px;width:88px;height:18px;background:#d3d3d3;box-shadow:inset 1px 0 0 #e4e4e4"></div><div class="r" style="left:575px;top:676px;width:27.3px;height:15px;background:linear-gradient(90deg,#53a067 0%,#becac1 100%)"></div><div class="t" style="left:580.6px;top:679.26px;font-size:13px;line-height:13px;color:#111;">$</div><div class="t" style="left:605.1px;top:679.26px;font-size:13px;line-height:13px;color:#111;">5,534.00</div><div class="r" style="left:662px;top:675px;width:88px;height:18px;background:#d3d3d3;box-shadow:inset 1px 0 0 #e4e4e4"></div><div class="r" style="left:663px;top:676px;width:21.0px;height:15px;background:linear-gradient(90deg,#53a067 0%,#becac1 100%)"></div><div class="t" style="left:669.3px;top:679.26px;font-size:13px;line-height:13px;color:#111;">$</div><div class="t" style="left:692.9px;top:679.26px;font-size:13px;line-height:13px;color:#111;">4,696.00</div><div class="r" style="left:750px;top:675px;width:89px;height:18px;background:#d3d3d3;box-shadow:inset 1px 0 0 #e4e4e4"></div><div class="r" style="left:751px;top:676px;width:33.1px;height:15px;background:linear-gradient(90deg,#53a067 0%,#becac1 100%)"></div><div class="t" style="left:757.1px;top:679.26px;font-size:13px;line-height:13px;color:#111;">$</div><div class="t" style="left:781.4px;top:679.26px;font-size:13px;line-height:13px;color:#111;">6,345.00</div><div class="r" style="left:839px;top:675px;width:97px;height:18px;background:#d3d3d3;box-shadow:inset 1px 0 0 #e4e4e4"></div><div class="r" style="left:840px;top:676px;width:18.2px;height:15px;background:linear-gradient(90deg,#53a067 0%,#becac1 100%)"></div><div class="t" style="left:845.6px;top:679.26px;font-size:13px;line-height:13px;color:#111;">$</div><div class="t" style="left:878.8px;top:679.26px;font-size:13px;line-height:13px;color:#111;">4,043.00</div><div class="r" style="left:936px;top:675px;width:88px;height:18px;background:#d3d3d3;box-shadow:inset 1px 0 0 #e4e4e4"></div><div class="r" style="left:937px;top:676px;width:36.2px;height:15px;background:linear-gradient(90deg,#53a067 0%,#becac1 100%)"></div><div class="t" style="left:943.0px;top:679.26px;font-size:13px;line-height:13px;color:#111;">$</div><div class="t" style="left:967.2px;top:679.26px;font-size:13px;line-height:13px;color:#111;">6,775.00</div><div class="r" style="left:1024px;top:675px;width:95px;height:18px;background:#d3d3d3;box-shadow:inset 1px 0 0 #e4e4e4"></div><div class="r" style="left:1025px;top:676px;width:66.0px;height:15px;background:linear-gradient(90deg,#53a067 0%,#becac1 100%)"></div><div class="t" style="left:1031.4px;top:679.26px;font-size:13px;line-height:13px;color:#111;">$</div><div class="t" style="left:1054.6px;top:679.26px;font-size:13px;line-height:13px;color:#111;">10,286.00</div><div class="r" style="left:485px;top:693px;width:89px;height:19px;background:#d3d3d3;box-shadow:inset 1px 0 0 #e4e4e4"></div><div class="r" style="left:486px;top:694px;width:32.7px;height:16px;background:linear-gradient(90deg,#53a067 0%,#becac1 100%)"></div><div class="t" style="left:492.0px;top:697.58px;font-size:13px;line-height:13px;color:#111;">$</div><div class="t" style="left:516.4px;top:697.58px;font-size:13px;line-height:13px;color:#111;">6,282.00</div><div class="r" style="left:574px;top:693px;width:88px;height:19px;background:#d3d3d3;box-shadow:inset 1px 0 0 #e4e4e4"></div><div class="r" style="left:575px;top:694px;width:47.5px;height:16px;background:linear-gradient(90deg,#53a067 0%,#becac1 100%)"></div><div class="t" style="left:580.6px;top:697.58px;font-size:13px;line-height:13px;color:#111;">$</div><div class="t" style="left:605.1px;top:697.58px;font-size:13px;line-height:13px;color:#111;">8,314.00</div><div class="r" style="left:662px;top:693px;width:88px;height:19px;background:#d3d3d3;box-shadow:inset 1px 0 0 #e4e4e4"></div><div class="r" style="left:663px;top:694px;width:86.7px;height:16px;background:linear-gradient(90deg,#53a067 0%,#becac1 100%)"></div><div class="t" style="left:669.3px;top:697.58px;font-size:13px;line-height:13px;color:#111;">$</div><div class="t" style="left:685.7px;top:697.58px;font-size:13px;line-height:13px;color:#111;">13,849.00</div><div class="r" style="left:750px;top:693px;width:89px;height:19px;background:#d3d3d3;box-shadow:inset 1px 0 0 #e4e4e4"></div><div class="r" style="left:751px;top:694px;width:40.4px;height:16px;background:linear-gradient(90deg,#53a067 0%,#becac1 100%)"></div><div class="t" style="left:757.1px;top:697.58px;font-size:13px;line-height:13px;color:#111;">$</div><div class="t" style="left:781.4px;top:697.58px;font-size:13px;line-height:13px;color:#111;">7,343.00</div><div class="r" style="left:839px;top:693px;width:97px;height:19px;background:#d3d3d3;box-shadow:inset 1px 0 0 #e4e4e4"></div><div class="r" style="left:840px;top:694px;width:82.0px;height:16px;background:linear-gradient(90deg,#53a067 0%,#becac1 100%)"></div><div class="t" style="left:845.6px;top:697.58px;font-size:13px;line-height:13px;color:#111;">$</div><div class="t" style="left:871.6px;top:697.58px;font-size:13px;line-height:13px;color:#111;">12,056.00</div><div class="r" style="left:936px;top:693px;width:88px;height:19px;background:#d3d3d3;box-shadow:inset 1px 0 0 #e4e4e4"></div><div class="r" style="left:937px;top:694px;width:22.3px;height:16px;background:linear-gradient(90deg,#53a067 0%,#becac1 100%)"></div><div class="t" style="left:943.0px;top:697.58px;font-size:13px;line-height:13px;color:#111;">$</div><div class="t" style="left:967.2px;top:697.58px;font-size:13px;line-height:13px;color:#111;">4,846.00</div><div class="r" style="left:1024px;top:693px;width:95px;height:19px;background:#d3d3d3;box-shadow:inset 1px 0 0 #e4e4e4"></div><div class="r" style="left:1025px;top:694px;width:27.0px;height:16px;background:linear-gradient(90deg,#53a067 0%,#becac1 100%)"></div><div class="t" style="left:1031.4px;top:697.58px;font-size:13px;line-height:13px;color:#111;">$</div><div class="t" style="left:1061.8px;top:697.58px;font-size:13px;line-height:13px;color:#111;">5,247.00</div><div class="r" style="left:23px;top:602px;width:110px;height:18px;background:#d0d0d0;box-shadow:inset 1px 0 0 #e4e4e4"></div><div class="r" style="left:133px;top:602px;width:88px;height:18px;background:#d0d0d0;box-shadow:inset 1px 0 0 #e4e4e4"></div><div class="r" style="left:221px;top:602px;width:88px;height:18px;background:#d0d0d0;box-shadow:inset 1px 0 0 #e4e4e4"></div><div class="t" style="left:27.0px;top:605.48px;font-size:13px;line-height:13px;color:#111;">Broadway</div><div class="r" style="left:134px;top:603px;width:14.5px;height:15px;background:linear-gradient(90deg,#53a067 0%,#becac1 100%)"></div><div class="t" style="left:139.5px;top:605.28px;font-size:13px;line-height:13px;color:#111;">$</div><div class="t" style="left:163.3px;top:605.28px;font-size:13px;line-height:13px;color:#111;">3,771.00</div><div class="r" style="left:222px;top:603px;width:1.7px;height:15px;background:linear-gradient(90deg,#53a067 0%,#becac1 100%)"></div><div class="t" style="left:226.4px;top:605.28px;font-size:13px;line-height:13px;color:#111;">$</div><div class="r" style="left:23px;top:620px;width:110px;height:18px;background:#d0d0d0;box-shadow:inset 1px 0 0 #e4e4e4"></div><div class="r" style="left:133px;top:620px;width:88px;height:18px;background:#d0d0d0;box-shadow:inset 1px 0 0 #e4e4e4"></div><div class="r" style="left:221px;top:620px;width:88px;height:18px;background:#d0d0d0;box-shadow:inset 1px 0 0 #e4e4e4"></div><div class="t" style="left:27.0px;top:623.80px;font-size:13px;line-height:13px;color:#111;">Second Ave</div><div class="r" style="left:134px;top:621px;width:56.6px;height:15px;background:linear-gradient(90deg,#53a067 0%,#becac1 100%)"></div><div class="t" style="left:139.5px;top:623.60px;font-size:13px;line-height:13px;color:#111;">$</div><div class="t" style="left:163.3px;top:623.60px;font-size:13px;line-height:13px;color:#111;">9,591.00</div><div class="r" style="left:222px;top:621px;width:65.8px;height:15px;background:linear-gradient(90deg,#53a067 0%,#becac1 100%)"></div><div class="t" style="left:226.4px;top:623.60px;font-size:13px;line-height:13px;color:#111;">$</div><div class="r" style="left:23px;top:638px;width:110px;height:19px;background:#d0d0d0;box-shadow:inset 1px 0 0 #e4e4e4"></div><div class="r" style="left:133px;top:638px;width:88px;height:19px;background:#d0d0d0;box-shadow:inset 1px 0 0 #e4e4e4"></div><div class="r" style="left:221px;top:638px;width:88px;height:19px;background:#d0d0d0;box-shadow:inset 1px 0 0 #e4e4e4"></div><div class="t" style="left:27.0px;top:642.12px;font-size:13px;line-height:13px;color:#111;">Coho Grocery</div><div class="r" style="left:134px;top:639px;width:80.5px;height:16px;background:linear-gradient(90deg,#53a067 0%,#becac1 100%)"></div><div class="t" style="left:139.5px;top:641.92px;font-size:13px;line-height:13px;color:#111;">$</div><div class="t" style="left:156.1px;top:641.92px;font-size:13px;line-height:13px;color:#111;">12,906.00</div><div class="r" style="left:222px;top:639px;width:8.8px;height:16px;background:linear-gradient(90deg,#53a067 0%,#becac1 100%)"></div><div class="t" style="left:226.4px;top:641.92px;font-size:13px;line-height:13px;color:#111;">$</div><div class="r" style="left:23px;top:657px;width:110px;height:18px;background:#d0d0d0;box-shadow:inset 1px 0 0 #e4e4e4"></div><div class="r" style="left:133px;top:657px;width:88px;height:18px;background:#d0d0d0;box-shadow:inset 1px 0 0 #e4e4e4"></div><div class="r" style="left:221px;top:657px;width:88px;height:18px;background:#d0d0d0;box-shadow:inset 1px 0 0 #e4e4e4"></div><div class="t" style="left:27.0px;top:660.44px;font-size:13px;line-height:13px;color:#111;">Third Ave</div><div class="r" style="left:134px;top:658px;width:87.4px;height:15px;background:linear-gradient(90deg,#53a067 0%,#becac1 100%)"></div><div class="t" style="left:139.5px;top:660.24px;font-size:13px;line-height:13px;color:#111;">$</div><div class="t" style="left:156.1px;top:660.24px;font-size:13px;line-height:13px;color:#111;">13,857.00</div><div class="t" style="left:226.4px;top:660.24px;font-size:13px;line-height:13px;color:#111;">$</div><div class="r" style="left:23px;top:675px;width:110px;height:18px;background:#d0d0d0;box-shadow:inset 1px 0 0 #e4e4e4"></div><div class="r" style="left:133px;top:675px;width:88px;height:18px;background:#d0d0d0;box-shadow:inset 1px 0 0 #e4e4e4"></div><div class="r" style="left:221px;top:675px;width:88px;height:18px;background:#d0d0d0;box-shadow:inset 1px 0 0 #e4e4e4"></div><div class="t" style="left:27.0px;top:678.76px;font-size:13px;line-height:13px;color:#111;">Fourth Street</div><div class="r" style="left:134px;top:676px;width:19.0px;height:15px;background:linear-gradient(90deg,#53a067 0%,#becac1 100%)"></div><div class="t" style="left:139.5px;top:678.56px;font-size:13px;line-height:13px;color:#111;">$</div><div class="t" style="left:163.3px;top:678.56px;font-size:13px;line-height:13px;color:#111;">4,394.00</div><div class="r" style="left:222px;top:676px;width:51.6px;height:15px;background:linear-gradient(90deg,#53a067 0%,#becac1 100%)"></div><div class="t" style="left:226.4px;top:678.56px;font-size:13px;line-height:13px;color:#111;">$</div><div class="r" style="left:23px;top:693px;width:110px;height:19px;background:#d0d0d0;box-shadow:inset 1px 0 0 #e4e4e4"></div><div class="r" style="left:133px;top:693px;width:88px;height:19px;background:#d0d0d0;box-shadow:inset 1px 0 0 #e4e4e4"></div><div class="r" style="left:221px;top:693px;width:88px;height:19px;background:#d0d0d0;box-shadow:inset 1px 0 0 #e4e4e4"></div><div class="t" style="left:27.0px;top:697.08px;font-size:13px;line-height:13px;color:#111;">Redmond Way</div><div class="r" style="left:134px;top:694px;width:60.8px;height:16px;background:linear-gradient(90deg,#53a067 0%,#becac1 100%)"></div><div class="t" style="left:139.5px;top:696.88px;font-size:13px;line-height:13px;color:#111;">$</div><div class="t" style="left:156.1px;top:696.88px;font-size:13px;line-height:13px;color:#111;">10,170.00</div><div class="r" style="left:222px;top:694px;width:51.6px;height:16px;background:linear-gradient(90deg,#53a067 0%,#becac1 100%)"></div><div class="t" style="left:226.4px;top:696.88px;font-size:13px;line-height:13px;color:#111;">$</div><div class="r" style="left:23px;top:564px;width:1090px;height:1.6px;background:#98a3b3"></div><div class="r" style="left:23px;top:563px;width:1090px;height:1px;background:rgba(255,255,255,0.3)"></div><div class="r" style="left:23px;top:582px;width:1090px;height:1.6px;background:#98a3b3"></div><div class="r" style="left:23px;top:581px;width:1090px;height:1px;background:rgba(255,255,255,0.3)"></div><div class="r" style="left:23px;top:601px;width:1090px;height:1.6px;background:#98a3b3"></div><div class="r" style="left:23px;top:600px;width:1090px;height:1px;background:rgba(255,255,255,0.3)"></div><div class="r" style="left:23px;top:619px;width:1090px;height:1.6px;background:#98a3b3"></div><div class="r" style="left:23px;top:618px;width:1090px;height:1px;background:rgba(255,255,255,0.3)"></div><div class="r" style="left:23px;top:637px;width:1090px;height:1.6px;background:#98a3b3"></div><div class="r" style="left:23px;top:636px;width:1090px;height:1px;background:rgba(255,255,255,0.3)"></div><div class="r" style="left:23px;top:656px;width:1090px;height:1.6px;background:#98a3b3"></div><div class="r" style="left:23px;top:655px;width:1090px;height:1px;background:rgba(255,255,255,0.3)"></div><div class="r" style="left:23px;top:674px;width:1090px;height:1.6px;background:#98a3b3"></div><div class="r" style="left:23px;top:673px;width:1090px;height:1px;background:rgba(255,255,255,0.3)"></div><div class="r" style="left:23px;top:692px;width:1090px;height:1.6px;background:#98a3b3"></div><div class="r" style="left:23px;top:691px;width:1090px;height:1px;background:rgba(255,255,255,0.3)"></div><div class="r" style="left:23px;top:711px;width:1090px;height:1.6px;background:#98a3b3"></div><div class="r" style="left:23px;top:710px;width:1090px;height:1px;background:rgba(255,255,255,0.3)"></div><div class="r" style="left:0px;top:714px;width:1110px;height:36px;background:#f0f0f0"></div><svg class="r" style="left:19px;top:724px" width="10" height="16" viewBox="0 0 10 16" fill="none"><path d="M7.5 2L2 8l5.5 6" stroke="#9a9a9a" stroke-width="1.3"/></svg><svg class="r" style="left:54px;top:724px" width="10" height="16" viewBox="0 0 10 16" fill="none"><path d="M2.5 2L8 8l-5.5 6" stroke="#9a9a9a" stroke-width="1.3"/></svg><div class="t" style="left:126.0px;top:725.50px;font-size:15px;line-height:15px;color:#242424;">Financial Summary</div><svg class="r" style="left:922px;top:726px" width="6" height="14" viewBox="0 0 6 14" fill="none"><circle cx="3" cy="2.5" r="1.3" fill="#333"/><circle cx="3" cy="7" r="1.3" fill="#333"/><circle cx="3" cy="11.5" r="1.3" fill="#333"/></svg><svg class="r" style="left:944px;top:724px" width="20" height="18" viewBox="0 0 20 18" fill="none"><circle cx="10" cy="9" r="9" fill="#fbfbfb"/><path d="M13 4.5L7 9l6 4.5z" fill="#6a6a6a"/></svg><div class="r" style="left:961px;top:726px;width:160px;height:11px;background:#777;border-radius:6px"></div><div class="r" style="left:0px;top:750px;width:1110px;height:34px;background:#f5f5f5"></div><div class="t" style="left:17.6px;top:761.94px;font-size:12px;line-height:12px;color:#505050;transform:scaleX(0.876);">Ready</div><svg class="r" style="left:79px;top:760px" width="19" height="16" viewBox="0 0 19 16" fill="none"><rect x="1" y="1.5" width="14" height="12" stroke="#444" stroke-width="1.1" fill="#fff"/><path d="M1 4.5h14M3.5 7h4M3.5 9.5h3" stroke="#444" stroke-width="1"/><circle cx="13" cy="11" r="4" fill="#fff" stroke="#444" stroke-width="1.1"/><circle cx="13" cy="11" r="2" fill="#444"/></svg><svg class="r" style="left:126px;top:759px" width="18" height="17" viewBox="0 0 18 17" fill="none"><circle cx="8" cy="2.6" r="1.8" stroke="#333" stroke-width="1.1"/><path d="M1.5 5.5l6.5 1.5 6.5-1.5M8 7v4l-3.5 5M8 11l2 2" stroke="#333" stroke-width="1.2"/><path d="M10.5 11.5l5 5M15.5 11.5l-5 5" stroke="#333" stroke-width="1.1"/></svg><div class="r" style="left:140px;top:755px;width:110px;height:25px;overflow:hidden"><div class="t" style="left:7.0px;top:7.14px;font-size:12px;line-height:12px;font-weight:bold;color:#242424;transform:scaleX(0.893);">Accessibility: Investigate</div></div><div class="t" style="left:876.0px;top:761.34px;font-size:12px;line-height:12px;color:#3a3a3a;transform:scaleX(0.891);">Average: 23486.31667</div><div class="t" style="left:1010.3px;top:761.34px;font-size:12px;line-height:12px;color:#3a3a3a;transform:scaleX(0.971);">Count: 288</div><div class="t" style="left:1096.8px;top:761.34px;font-size:12px;line-height:12px;color:#3a3a3a;">Sum: 6764059</div><div class="r" style="left:0px;top:783.5px;width:1110px;height:2px;background:#2f7a55"></div></div><div class="r" style="left:0;top:785px;width:1110px;height:22px;overflow:hidden;border-radius:0 0 22px 22px;background:#1a44b8"><svg width="1110" height="22" style="position:absolute;left:0;top:0"><defs><linearGradient id="wg" x1="0" y1="0" x2="0" y2="1"><stop offset="0" stop-color="#8494ae"/><stop offset="1" stop-color="#9aa8c0"/></linearGradient></defs><rect x="0" y="0" width="200" height="22" fill="url(#wg)"/><path d="M190 0H225L245 22H205Z" fill="#3b73dc"/><path d="M225 0H260V22H245Z" fill="#1d4fc8"/><path d="M480 0H585C590 8 596 15 600 22H480Z" fill="#0b2a98"/><path d="M585 0H640C650 8 660 15 668 22H600C596 15 590 8 585 0Z" fill="#3070e2"/><path d="M618 0C628 8 636 15 642 22" stroke="#5a90ee" stroke-width="2" fill="none"/><path d="M640 0H700C708 8 714 15 720 22H668C660 15 650 8 640 0Z" fill="#1540b4"/><path d="M700 0H770C780 8 790 15 800 22H720C714 15 708 8 700 0Z" fill="#2c66dc"/><path d="M770 0H990L900 22H800C790 15 780 8 770 0Z" fill="#2258d2"/><path d="M860 0H975C950 4 920 6 890 6C880 5 870 3 860 0Z" fill="#0a1f78"/><path d="M990 0H1110V22H900Z" fill="#0a2388"/><path d="M960 22L1010 0H1110V22Z" fill="#0c2fa2" opacity=".6"/></svg></div><div class="r" style="left:20px;top:131px;width:231px;height:468px;background:#fff;border:1px solid #767676;border-radius:4px;box-sizing:border-box;box-shadow:0 3px 8px rgba(0,0,0,0.22)"></div><div class="r" style="left:22px;top:359px;width:225px;height:45px;background:#f0f0f0"></div><div class="t" style="left:74.9px;top:152.50px;font-size:13px;line-height:13px;font-weight:bold;color:#1a1a1a;transform:scaleX(0.954);text-decoration-thickness:1px;text-underline-offset:2px">From <u>F</u>ile</div><svg class="r" style="left:233px;top:150.0px" width="8" height="12" viewBox="0 0 8 12" fill="none"><path d="M1.5 1.5L6 6l-4.5 4.5" stroke="#333" stroke-width="1.3"/></svg><div class="t" style="left:74.9px;top:197.30px;font-size:13px;line-height:13px;font-weight:bold;color:#1a1a1a;transform:scaleX(0.969);text-decoration-thickness:1px;text-underline-offset:2px">From <u>D</u>atabase</div><svg class="r" style="left:233px;top:194.8px" width="8" height="12" viewBox="0 0 8 12" fill="none"><path d="M1.5 1.5L6 6l-4.5 4.5" stroke="#333" stroke-width="1.3"/></svg><div class="t" style="left:74.9px;top:242.70px;font-size:13px;line-height:13px;font-weight:bold;color:#1a1a1a;transform:scaleX(0.990);text-decoration-thickness:1px;text-underline-offset:2px">From <u>A</u>zure</div><svg class="r" style="left:233px;top:240.2px" width="8" height="12" viewBox="0 0 8 12" fill="none"><path d="M1.5 1.5L6 6l-4.5 4.5" stroke="#333" stroke-width="1.3"/></svg><div class="t" style="left:74.9px;top:288.20px;font-size:13px;line-height:13px;font-weight:bold;color:#1a1a1a;text-decoration-thickness:1px;text-underline-offset:2px">From Pow<u>e</u>r Platform</div><svg class="r" style="left:233px;top:285.7px" width="8" height="12" viewBox="0 0 8 12" fill="none"><path d="M1.5 1.5L6 6l-4.5 4.5" stroke="#333" stroke-width="1.3"/></svg><div class="t" style="left:74.9px;top:333.00px;font-size:13px;line-height:13px;font-weight:bold;color:#1a1a1a;transform:scaleX(0.958);text-decoration-thickness:1px;text-underline-offset:2px">From Online Se<u>r</u>vices</div><svg class="r" style="left:233px;top:330.5px" width="8" height="12" viewBox="0 0 8 12" fill="none"><path d="M1.5 1.5L6 6l-4.5 4.5" stroke="#333" stroke-width="1.3"/></svg><div class="t" style="left:74.9px;top:378.30px;font-size:13px;line-height:13px;font-weight:bold;color:#1a1a1a;transform:scaleX(0.959);text-decoration-thickness:1px;text-underline-offset:2px">From <u>O</u>ther Sources</div><svg class="r" style="left:233px;top:375.8px" width="8" height="12" viewBox="0 0 8 12" fill="none"><path d="M1.5 1.5L6 6l-4.5 4.5" stroke="#333" stroke-width="1.3"/></svg><svg class="r" style="left:40px;top:140px" width="33" height="34" viewBox="0 0 33 34" fill="none"><path d="M1.5 1.5h13l8 8v21H1.5z" fill="#f7f7f7"/><path d="M14.5 1.5H1.5V30.5H22" stroke="#303030" stroke-width="1.15" stroke-linejoin="round"/><path d="M14.5 1.5l8 8V30.5" stroke="#303030" stroke-width="1.15" stroke-linejoin="round"/><path d="M14.5 1.5v8h8" stroke="#303030" stroke-width="1.15" fill="#fff" stroke-linejoin="round"/></svg><svg class="r" style="left:40px;top:185px" width="33" height="34" viewBox="0 0 33 34" fill="none"><path d="M1.5 1.5h13l8 8v21H1.5z" fill="#f7f7f7"/><path d="M14.5 1.5H1.5V30.5H15" stroke="#303030" stroke-width="1.15" stroke-linejoin="round"/><path d="M14.5 1.5l8 8V14" stroke="#303030" stroke-width="1.15" stroke-linejoin="round"/><path d="M14.5 1.5v8h8" stroke="#303030" stroke-width="1.15" fill="#fff" stroke-linejoin="round"/><path d="M15.5 16.5v12.3c0 1.5 3 2.7 6.8 2.7s6.8-1.2 6.8-2.7V16.5" stroke="#e28530" stroke-width="1.4" fill="#fff"/><ellipse cx="22.3" cy="16.5" rx="6.8" ry="2.6" stroke="#e28530" stroke-width="1.4" fill="#fff"/></svg><svg class="r" style="left:32px;top:225px" width="40" height="40" viewBox="0 0 40 40" fill="none"><path d="M17.5 7.5H26C26.6 7.5 27 7.8 27.2 8.3L34.8 32.3C35 33 34.6 33.6 33.9 33.6H24.8Z" stroke="#1a86d0" stroke-width="1.9" stroke-linejoin="round" fill="#fff"/><path d="M14.8 7.5H18.2L19.8 24.2L13.3 25.3L23.4 33.6H7.4C6.6 33.6 6.1 33 6.4 32.2Z" fill="#1a86d0" stroke="#1a86d0" stroke-width="1" stroke-linejoin="round"/></svg><svg class="r" style="left:32px;top:270px" width="40" height="40" viewBox="0 0 40 40" fill="none"><path d="M15 6.5H31C34 6.5 35.5 9.5 34.5 12.5L33.5 15C33 13.5 31.5 12.5 29.5 12.5H13.5C12.8 12.5 12.5 12 12.8 11.3L14 7.5C14.2 7 14.6 6.5 15 6.5Z" fill="#333" stroke="#222" stroke-width="1"/><path d="M11.5 16.3H30C31.8 16.3 33.3 15 33.8 14.2L29.5 22.3C29 23.1 28 23.6 27 23.6H7.6C6.8 23.6 6.4 22.9 6.7 22.2L10.1 17.2C10.4 16.7 10.9 16.3 11.5 16.3Z" stroke="#222" stroke-width="1.9" stroke-linejoin="round"/><path d="M6.6 24.6L11.4 34.8L17.2 24.2" stroke="#222" stroke-width="1.9" stroke-linejoin="round"/></svg><svg class="r" style="left:40px;top:321px" width="33" height="34" viewBox="0 0 33 34" fill="none"><path d="M1.5 1.5h13l8 8v21H1.5z" fill="#f7f7f7"/><path d="M14.5 1.5H1.5V30.5H13" stroke="#303030" stroke-width="1.15" stroke-linejoin="round"/><path d="M14.5 1.5l8 8V22" stroke="#303030" stroke-width="1.15" stroke-linejoin="round"/><path d="M14.5 1.5v8h8" stroke="#303030" stroke-width="1.15" fill="#fff" stroke-linejoin="round"/><path d="M13 31h15a4 4 0 0 0 0-8 5.5 5.5 0 0 0-10.5-1A4.5 4.5 0 0 0 13 31z" stroke="#2b88d8" stroke-width="1.4" fill="#fff"/></svg><svg class="r" style="left:40px;top:366px" width="33" height="34" viewBox="0 0 33 34" fill="none"><path d="M1.5 1.5h13l8 8v21H1.5z" fill="#f7f7f7"/><path d="M14.5 1.5H1.5V30.5H12" stroke="#303030" stroke-width="1.15" stroke-linejoin="round"/><path d="M14.5 1.5l8 8V26" stroke="#303030" stroke-width="1.15" stroke-linejoin="round"/><path d="M14.5 1.5v8h8" stroke="#303030" stroke-width="1.15" fill="#fff" stroke-linejoin="round"/><circle cx="17.3" cy="19.3" r="2.3" stroke="#2b88d8" stroke-width="1.25" fill="#fff"/><circle cx="17.3" cy="29" r="3.4" stroke="#2b88d8" stroke-width="1.25" fill="#fff"/><circle cx="27.2" cy="29" r="2.4" stroke="#2b88d8" stroke-width="1.25" fill="#fff"/><path d="M17.3 21.6V25.6M20.7 29H24.8" stroke="#2b88d8" stroke-width="1.25"/></svg><svg class="r" style="left:36px;top:411px" width="30" height="32" viewBox="0 0 30 32" fill="none"><path d="M8 1h11l7 7v21H8z" stroke="#bdbdbd" stroke-width="1.3" fill="#f6f6f6"/><path d="M19 1v7h7" stroke="#bdbdbd" stroke-width="1.3"/><rect x="1.5" y="12" width="13" height="18" stroke="#bdbdbd" stroke-width="1.3" fill="#e9e9e9"/><rect x="4" y="15" width="8" height="13" fill="#d7d7d7"/></svg><div class="t" style="left:74.9px;top:423.60px;font-size:13px;line-height:13px;font-weight:bold;color:#ababab;transform:scaleX(0.958);">Legacy <u>W</u>izards</div><svg class="r" style="left:233px;top:421px" width="8" height="12" viewBox="0 0 8 12" fill="none"><path d="M1.5 1.5L6 6l-4.5 4.5" stroke="#b8b8b8" stroke-width="1.3"/></svg><div class="r" style="left:69px;top:450px;width:178px;height:1.2px;background:#d6d6d6"></div><svg class="r" style="left:34px;top:459px" width="34" height="33" viewBox="0 0 34 33" fill="none"><rect x="3.5" y="1.5" width="16" height="16" stroke="#303030" stroke-width="1.2" fill="#fff"/><path d="M3.5 6h16M3.5 10.5h16M3.5 15h16M9 1.5v16M14 1.5v16" stroke="#303030" stroke-width="1"/><rect x="13.5" y="10.5" width="18" height="20" stroke="#303030" stroke-width="1.2" fill="#fff"/><path d="M13.5 15.5h18M13.5 20.5h18M13.5 25.5h18M19.5 10.5v20M25.5 10.5v20" stroke="#303030" stroke-width="1"/><path d="M1 26h14M10 21l5 5-5 5" stroke="#2b88d8" stroke-width="1.4"/></svg><div class="t" style="left:74.9px;top:471.60px;font-size:13px;line-height:13px;font-weight:bold;color:#1a1a1a;transform:scaleX(0.966);">Combine <u>Q</u>ueries</div><svg class="r" style="left:233px;top:469px" width="8" height="12" viewBox="0 0 8 12" fill="none"><path d="M1.5 1.5L6 6l-4.5 4.5" stroke="#333" stroke-width="1.3"/></svg><div class="r" style="left:22px;top:499.5px;width:225px;height:1.2px;background:#d6d6d6"></div><svg class="r" style="left:34px;top:506px" width="20" height="20" viewBox="0 0 20 20" fill="none"><rect x="1.5" y="1.5" width="15" height="15" stroke="#303030" stroke-width="1.2" fill="#fff"/><path d="M1.5 5.5h15M1.5 10h9M1.5 14.5h6M6 1.5v15M11 1.5v9" stroke="#303030" stroke-width="1"/><path d="M8 18l1-4 8-8 3 3-8 8z" fill="#fff" stroke="#2b88d8" stroke-width="1.4"/></svg><div class="t" style="left:61.5px;top:509.80px;font-size:13px;line-height:13px;color:#242424;transform:scaleX(0.961);"><u>L</u>aunch Power Query Editor...</div><div class="r" style="left:56px;top:533px;width:191px;height:1.2px;background:#d6d6d6"></div><svg class="r" style="left:36px;top:541px" width="20" height="20" viewBox="0 0 20 20" fill="none"><path d="M1.5 1.5h8l4 4v3M1.5 1.5v16h5" stroke="#303030" stroke-width="1.15"/><path d="M9.5 1.5v4h4" stroke="#303030" stroke-width="1.15"/><path d="M16.50 13.50 L16.32 14.85 L14.50 15.35 L13.92 16.12 L13.90 18.00 L12.65 18.52 L11.30 17.20 L10.34 17.07 L8.70 18.00 L7.62 17.18 L8.10 15.35 L7.73 14.46 L6.10 13.50 L6.28 12.15 L8.10 11.65 L8.68 10.88 L8.70 9.00 L9.95 8.48 L11.30 9.80 L12.26 9.93 L13.90 9.00 L14.98 9.82 L14.50 11.65 L14.87 12.54Z" stroke="#2b88d8" stroke-width="1.2" fill="#fff" stroke-linejoin="round"/><circle cx="11.3" cy="13.5" r="1.50" stroke="#2b88d8" stroke-width="1.08" fill="#fff"/></svg><div class="t" style="left:61.5px;top:544.80px;font-size:13px;line-height:13px;color:#242424;transform:scaleX(0.954);">Data Source <u>S</u>ettings...</div><svg class="r" style="left:36px;top:572px" width="16" height="20" viewBox="0 0 16 20" fill="none"><rect x="1.5" y="1.5" width="12" height="17" stroke="#303030" stroke-width="1.2" fill="#fff"/><rect x="4" y="6" width="2.5" height="2.5" stroke="#303030" stroke-width=".9"/><rect x="4" y="11" width="2.5" height="2.5" stroke="#303030" stroke-width=".9"/><path d="M8 7h3M8 12h3" stroke="#303030" stroke-width="1"/></svg><div class="t" style="left:61.5px;top:575.50px;font-size:13px;line-height:13px;color:#242424;">Query O<u>p</u>tions</div><div class="r" style="left:249.5px;top:265px;width:237px;height:560px;background:#fff;border:1px solid #767676;border-radius:4px;box-sizing:border-box;box-shadow:0 3px 8px rgba(0,0,0,0.22)"></div><div class="r" style="left:252px;top:628px;width:233px;height:45px;background:#f0f0f0"></div><svg class="r" style="left:265px;top:273px" width="33" height="32" viewBox="0 0 33 32" fill="none"><rect x="1.5" y="1.5" width="30" height="29" stroke="#303030" stroke-width="1.4" fill="#fff"/><path d="M1.5 8h30M1.5 15.5h30M1.5 23h30M11.5 1.5v29M21.5 1.5v29" stroke="#303030" stroke-width="1.1"/><path d="M4 3.5h5l-2.5 3zM14 3.5h5l-2.5 3zM24 3.5h5l-2.5 3z" fill="#2b88d8"/></svg><div class="t" style="left:304.0px;top:283.40px;font-size:13px;line-height:13px;font-weight:bold;color:#1a1a1a;">From <u>T</u>able/Range</div><div class="t" style="left:304.0px;top:328.50px;font-size:13px;line-height:13px;font-weight:bold;color:#1a1a1a;">From <u>W</u>eb</div><div class="t" style="left:304.0px;top:373.60px;font-size:13px;line-height:13px;font-weight:bold;color:#ababab;">From <u>M</u>icrosoft Query</div><div class="t" style="left:304.0px;top:418.70px;font-size:13px;line-height:13px;font-weight:bold;color:#1a1a1a;transform:scaleX(0.966);">From SharePoint L<u>i</u>st</div><div class="t" style="left:304.0px;top:463.80px;font-size:13px;line-height:13px;font-weight:bold;color:#1a1a1a;transform:scaleX(0.969);">From <u>O</u>Data Feed</div><div class="t" style="left:304.0px;top:509.00px;font-size:13px;line-height:13px;font-weight:bold;color:#1a1a1a;transform:scaleX(0.977);">From <u>H</u>adoop File (HDFS)</div><div class="t" style="left:304.0px;top:554.00px;font-size:13px;line-height:13px;font-weight:bold;color:#1a1a1a;">From <u>A</u>ctive Directory</div><div class="t" style="left:304.0px;top:599.00px;font-size:13px;line-height:13px;font-weight:bold;color:#1a1a1a;transform:scaleX(0.980);">From Microsoft <u>E</u>xchange</div><div class="t" style="left:304.0px;top:644.90px;font-size:13px;line-height:13px;font-weight:bold;color:#1a1a1a;transform:scaleX(0.946);">From O<u>D</u>BC</div><div class="t" style="left:304.0px;top:690.00px;font-size:13px;line-height:13px;font-weight:bold;color:#1a1a1a;transform:scaleX(0.924);">From OLED<u>B</u></div><div class="t" style="left:304.0px;top:737.60px;font-size:13px;line-height:13px;font-weight:bold;color:#1a1a1a;transform:scaleX(0.975);"><u>F</u>rom Picture</div><div class="t" style="left:304.0px;top:780.50px;font-size:13px;line-height:13px;font-weight:bold;color:#1a1a1a;transform:scaleX(0.966);">Blank <u>Q</u>uery</div><svg class="r" style="left:469px;top:734px" width="8" height="12" viewBox="0 0 8 12" fill="none"><path d="M1.5 1.5L6 6l-4.5 4.5" stroke="#333" stroke-width="1.3"/></svg><svg class="r" style="left:269px;top:319px" width="33" height="34" viewBox="0 0 33 34" fill="none"><path d="M1.5 1.5h13l8 8v21H1.5z" fill="#f7f7f7"/><path d="M14.5 1.5H1.5V30.5H14" stroke="#303030" stroke-width="1.15" stroke-linejoin="round"/><path d="M14.5 1.5l8 8V15" stroke="#303030" stroke-width="1.15" stroke-linejoin="round"/><path d="M14.5 1.5v8h8" stroke="#303030" stroke-width="1.15" fill="#fff" stroke-linejoin="round"/><circle cx="22" cy="23.5" r="8" fill="#fff" stroke="#2b88d8" stroke-width="1.5"/><path d="M14 23.5h16M22 15.5v16" stroke="#2b88d8" stroke-width="1.2"/><ellipse cx="22" cy="23.5" rx="3.6" ry="8" stroke="#2b88d8" stroke-width="1.2"/><path d="M15.5 19h13M15.5 28h13" stroke="#2b88d8" stroke-width="1.1"/></svg><svg class="r" style="left:269px;top:364px" width="33" height="34" viewBox="0 0 33 34" fill="none"><path d="M1.5 1.5h13l8 8v21H1.5z" fill="#f8f8f8"/><path d="M14.5 1.5H1.5V30.5H14" stroke="#bdbdbd" stroke-width="1.15" stroke-linejoin="round"/><path d="M14.5 1.5l8 8V16" stroke="#bdbdbd" stroke-width="1.15" stroke-linejoin="round"/><path d="M14.5 1.5v8h8" stroke="#bdbdbd" stroke-width="1.15" fill="#fff" stroke-linejoin="round"/><rect x="14" y="16" width="15" height="15" fill="#fff" stroke="#bdbdbd" stroke-width="1.3"/><path d="M14 21h15M14 26h15M19 16v15M24 16v15" stroke="#bdbdbd" stroke-width="1"/></svg><svg class="r" style="left:270px;top:409px" width="33" height="34" viewBox="0 0 33 34" fill="none"><path d="M1.5 1.5h13l8 8v21H1.5z" fill="#f7f7f7"/><path d="M14.5 1.5H1.5V30.5H14" stroke="#303030" stroke-width="1.15" stroke-linejoin="round"/><path d="M14.5 1.5l8 8V17" stroke="#303030" stroke-width="1.15" stroke-linejoin="round"/><path d="M14.5 1.5v8h8" stroke="#303030" stroke-width="1.15" fill="#fff" stroke-linejoin="round"/><rect x="14" y="17" width="15" height="15" fill="#037c80"/><text x="21.5" y="29" font-size="11" font-weight="bold" fill="#fff" text-anchor="middle" font-family="Liberation Sans">S</text></svg><svg class="r" style="left:269px;top:454px" width="33" height="34" viewBox="0 0 33 34" fill="none"><path d="M1.5 1.5h13l8 8v21H1.5z" fill="#f7f7f7"/><path d="M14.5 1.5H1.5V30.5H13" stroke="#303030" stroke-width="1.15" stroke-linejoin="round"/><path d="M14.5 1.5l8 8V19" stroke="#303030" stroke-width="1.15" stroke-linejoin="round"/><path d="M14.5 1.5v8h8" stroke="#303030" stroke-width="1.15" fill="#fff" stroke-linejoin="round"/><path d="M4 11h8M4 15h8M4 19h8M4 23h8M4 27h8" stroke="#777" stroke-width="1.1"/><rect x="13" y="19" width="16" height="13" fill="#e8801e"/><path d="M19 22.5h7M19 26h7M19 29h7" stroke="#fff" stroke-width="1.2"/><circle cx="16" cy="28.5" r="1.4" fill="#fff"/><path d="M15 22.5h2" stroke="#fff" stroke-width="1.2"/></svg><svg class="r" style="left:269px;top:499px" width="33" height="34" viewBox="0 0 33 34" fill="none"><path d="M1.5 1.5h13l8 8v21H1.5z" fill="#f7f7f7"/><path d="M14.5 1.5H1.5V30.5H12" stroke="#303030" stroke-width="1.15" stroke-linejoin="round"/><path d="M14.5 1.5l8 8V26" stroke="#303030" stroke-width="1.15" stroke-linejoin="round"/><path d="M14.5 1.5v8h8" stroke="#303030" stroke-width="1.15" fill="#fff" stroke-linejoin="round"/><circle cx="17.3" cy="19.3" r="2.3" stroke="#2b88d8" stroke-width="1.25" fill="#fff"/><circle cx="17.3" cy="29" r="3.4" stroke="#2b88d8" stroke-width="1.25" fill="#fff"/><circle cx="27.2" cy="29" r="2.4" stroke="#2b88d8" stroke-width="1.25" fill="#fff"/><path d="M17.3 21.6V25.6M20.7 29H24.8" stroke="#2b88d8" stroke-width="1.25"/></svg><svg class="r" style="left:269px;top:544px" width="33" height="34" viewBox="0 0 33 34" fill="none"><path d="M1.5 1.5h13l8 8v21H1.5z" fill="#f7f7f7"/><path d="M14.5 1.5H1.5V30.5H12" stroke="#303030" stroke-width="1.15" stroke-linejoin="round"/><path d="M14.5 1.5l8 8V17" stroke="#303030" stroke-width="1.15" stroke-linejoin="round"/><path d="M14.5 1.5v8h8" stroke="#303030" stroke-width="1.15" fill="#fff" stroke-linejoin="round"/><circle cx="16.3" cy="25.5" r="3.3" stroke="#2b88d8" stroke-width="1.3" fill="#fff"/><path d="M11.5 33L14.6 28.6M18 28.6L21.2 33" stroke="#2b88d8" stroke-width="1.3"/><circle cx="25" cy="20.6" r="3" stroke="#303030" stroke-width="1.2" fill="#fff"/><path d="M21.2 25.5L23.2 23.3M26.8 23.3L29.6 26.3" stroke="#303030" stroke-width="1.2"/></svg><svg class="r" style="left:269px;top:589px" width="33" height="34" viewBox="0 0 33 34" fill="none"><path d="M1.5 1.5h13l8 8v21H1.5z" fill="#f7f7f7"/><path d="M14.5 1.5H1.5V30.5H14" stroke="#303030" stroke-width="1.15" stroke-linejoin="round"/><path d="M14.5 1.5l8 8V17" stroke="#303030" stroke-width="1.15" stroke-linejoin="round"/><path d="M14.5 1.5v8h8" stroke="#303030" stroke-width="1.15" fill="#fff" stroke-linejoin="round"/><rect x="14" y="17" width="15" height="15" fill="#0f6cbd"/><text x="21.5" y="29" font-size="11" font-weight="bold" fill="#fff" text-anchor="middle" font-family="Liberation Sans">E</text></svg><svg class="r" style="left:269px;top:635px" width="33" height="34" viewBox="0 0 33 34" fill="none"><path d="M1.5 1.5h13l8 8v21H1.5z" fill="#f7f7f7"/><path d="M14.5 1.5H1.5V30.5H12" stroke="#303030" stroke-width="1.15" stroke-linejoin="round"/><path d="M14.5 1.5l8 8V26" stroke="#303030" stroke-width="1.15" stroke-linejoin="round"/><path d="M14.5 1.5v8h8" stroke="#303030" stroke-width="1.15" fill="#fff" stroke-linejoin="round"/><circle cx="17.3" cy="19.3" r="2.3" stroke="#2b88d8" stroke-width="1.25" fill="#fff"/><circle cx="17.3" cy="29" r="3.4" stroke="#2b88d8" stroke-width="1.25" fill="#fff"/><circle cx="27.2" cy="29" r="2.4" stroke="#2b88d8" stroke-width="1.25" fill="#fff"/><path d="M17.3 21.6V25.6M20.7 29H24.8" stroke="#2b88d8" stroke-width="1.25"/></svg><svg class="r" style="left:269px;top:680px" width="33" height="34" viewBox="0 0 33 34" fill="none"><path d="M1.5 1.5h13l8 8v21H1.5z" fill="#f7f7f7"/><path d="M14.5 1.5H1.5V30.5H12" stroke="#303030" stroke-width="1.15" stroke-linejoin="round"/><path d="M14.5 1.5l8 8V26" stroke="#303030" stroke-width="1.15" stroke-linejoin="round"/><path d="M14.5 1.5v8h8" stroke="#303030" stroke-width="1.15" fill="#fff" stroke-linejoin="round"/><circle cx="17.3" cy="19.3" r="2.3" stroke="#2b88d8" stroke-width="1.25" fill="#fff"/><circle cx="17.3" cy="29" r="3.4" stroke="#2b88d8" stroke-width="1.25" fill="#fff"/><circle cx="27.2" cy="29" r="2.4" stroke="#2b88d8" stroke-width="1.25" fill="#fff"/><path d="M17.3 21.6V25.6M20.7 29H24.8" stroke="#2b88d8" stroke-width="1.25"/></svg><svg class="r" style="left:265px;top:728px" width="35" height="31" viewBox="0 0 35 31" fill="none"><rect x="1.5" y="1.5" width="29" height="21" stroke="#303030" stroke-width="1.2" fill="#fff"/><path d="M1.5 8.5h29M1.5 15.5h29M11 1.5v21M20.5 1.5v21" stroke="#303030" stroke-width="1"/><rect x="13" y="17" width="20" height="13" rx="1.5" fill="#fff" stroke="#2b88d8" stroke-width="1.4"/><path d="M18 17l1.5-2.5h7L28 17" stroke="#2b88d8" stroke-width="1.4" fill="#fff"/><circle cx="23" cy="23.5" r="3.5" stroke="#2b88d8" stroke-width="1.4"/></svg><svg class="r" style="left:269px;top:771px" width="33" height="34" viewBox="0 0 33 34" fill="none"><path d="M1.5 1.5h13l8 8v21H1.5z" fill="#f7f7f7"/><path d="M14.5 1.5H1.5V30.5H12" stroke="#303030" stroke-width="1.15" stroke-linejoin="round"/><path d="M14.5 1.5l8 8V15" stroke="#303030" stroke-width="1.15" stroke-linejoin="round"/><path d="M14.5 1.5v8h8" stroke="#303030" stroke-width="1.15" fill="#fff" stroke-linejoin="round"/><path d="M16 28.5V17.5a2 2 0 0 1 2-2H27.3a2 2 0 0 1 0 4H26V30a2 2 0 0 1-2 2H15a1.8 1.8 0 0 1 0-3.5H22" stroke="#d9534f" stroke-width="1.3" fill="#fff" stroke-linejoin="round"/><path d="M27.3 15.5a2 2 0 0 0-1.3 3.5" stroke="#d9534f" stroke-width="1.1"/></svg></body></html>
